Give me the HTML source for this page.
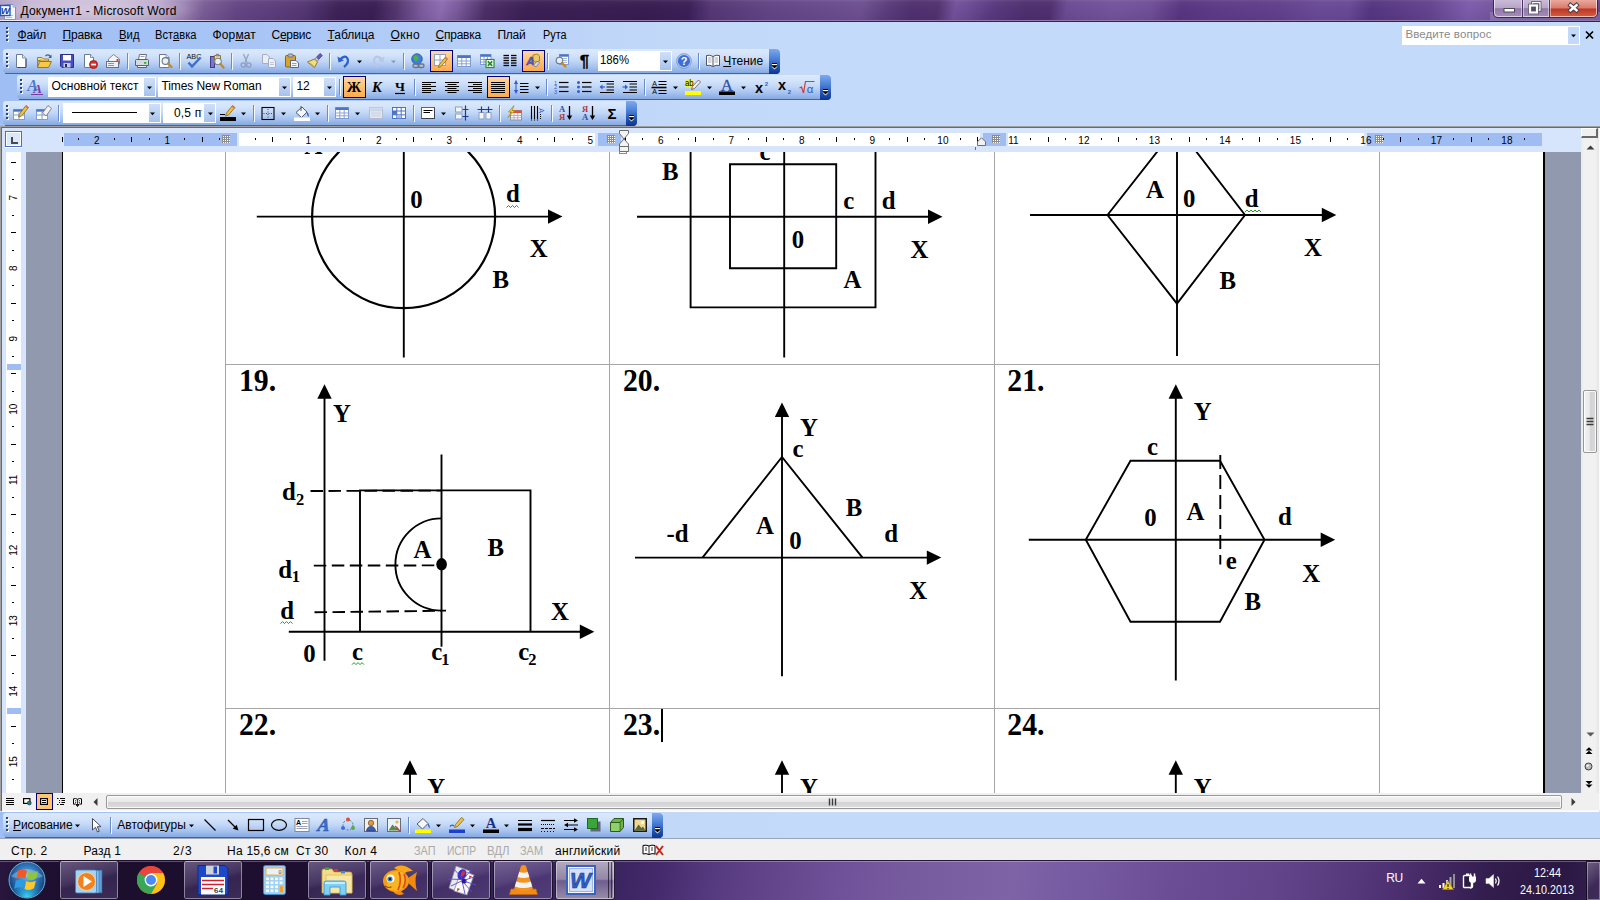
<!DOCTYPE html>
<html lang="ru"><head><meta charset="utf-8"><title>Документ1 - Microsoft Word</title>
<style>
html,body{margin:0;padding:0}
body{width:1600px;height:900px;position:relative;overflow:hidden;background:#c3d9f9;font-family:"Liberation Sans",sans-serif;font-size:12px;color:#000}
.t{position:absolute;white-space:pre;line-height:normal}
.ff-s{font-family:"Liberation Sans",sans-serif}
.ff-r{font-family:"Liberation Serif",serif}
div{box-sizing:border-box}
svg{position:absolute;overflow:visible}
u{text-decoration:underline;text-underline-offset:1px}

#titlebar{position:absolute;left:0;top:0;width:1600px;height:22px;overflow:hidden;
 background:linear-gradient(100deg,#b09bc4 0px,#c0aed0 30px,#c6b5d4 110px,#b9a5ca 158px,#9d85b5 182px,#7a5d95 202px,#644685 235px,#553774 300px,#3d2258 335px,#391f54 370px,#54366f 392px,#7c5c9e 418px,#8d6bb0 436px,#7a5a9c 452px,#4c2e66 480px,#3b2055 520px,#371d51 640px,#3b2058 680px,#553775 702px,#634586 760px,#6e5091 850px,#5b3c7c 875px,#50306f 900px,#52326f 925px,#73529a 942px,#6a4a92 957px,#5a3a80 978px,#4e2f6f 1012px,#50306f 1036px,#6b4b93 1052px,#74549c 1100px,#6f4f97 1135px,#5a3580 1165px,#5e3b87 1200px,#62408c 1260px,#6a4a96 1300px,#694995 1330px,#553580 1352px,#5c3c86 1380px,#64448e 1410px,#7d5cac 1448px,#76569f 1470px,#6a4a94 1500px,#64438e 1600px)}
#titlebar .hl{position:absolute;left:0;top:0;width:1600px;height:22px;background:linear-gradient(180deg,rgba(255,255,255,.10) 0,rgba(255,255,255,.03) 2px,rgba(255,255,255,0) 9px,rgba(20,0,40,.06) 19px)}
#titlebar .l1{position:absolute;left:0;top:20px;width:1600px;height:1px;background:linear-gradient(90deg,#efe8f4 0,#e2d8ea 180px,#a994be 260px,#9079a8 420px,#8f78a8 1600px)}
#titlebar .l2{position:absolute;left:0;top:21px;width:1600px;height:1px;background:#33224a}
#menubar{position:absolute;left:0;top:22px;width:1600px;height:106px;background:linear-gradient(90deg,#9fbef4 0,#a8c5f6 250px,#b9d1f8 500px,#c2d8f9 660px,#c4dafa 800px,#c4dafa 1600px)}
.tb{position:absolute;height:25px;border-radius:3px 0 0 4px}
.tb .bg{position:absolute;left:0;top:0;right:0;height:24px;border-radius:3px 2px 2px 4px;background:linear-gradient(180deg,#dce9fc 0,#d3e3fa 25%,#c1d7f7 50%,#a5c2ef 75%,#86a9e2 100%)}
.tb .sh{position:absolute;left:2px;right:2px;top:24px;height:1px;background:#4163a8}
.tb .cap{position:absolute;right:0;top:0;width:11px;height:25px;border-radius:0 4px 4px 0;background:linear-gradient(180deg,#7da9ee 0,#4b7fd6 40%,#1f4fae 75%,#0a3596 100%)}
.grip{position:absolute;width:3px;height:15px}
.grip i{position:absolute;left:0;width:2px;height:2px;background:#2a457e;box-shadow:1px 1px 0 #fff}
.sep{position:absolute;width:1px;height:16px;background:#6a8ccb;box-shadow:1px 1px 0 #f4f9ff}
.sel{position:absolute;border:1px solid #000080;background:linear-gradient(180deg,#ffd9a2 0,#ffc071 50%,#ffaa4e 100%)}
.cb{position:absolute;background:#fff;height:20px}
.cb .dd{position:absolute;right:1px;top:1px;bottom:1px;width:11px;background:linear-gradient(180deg,#cfdff7 0,#bcd2f3 50%,#a6c1ec 100%)}
.arr{position:absolute;width:0;height:0;border-left:3px solid transparent;border-right:3px solid transparent;border-top:3px solid #000}

#work{position:absolute;left:0;top:126px;width:1600px;height:686px;background:#d6e5fb}
#ws{position:absolute;left:26px;top:26px;width:1555px;height:641px;background:#9099ae;overflow:hidden}
#page{position:absolute;left:36px;top:0;width:1483px;height:641px;background:#fff;border-left:1px solid #000;border-right:2px solid #000}
.rn{position:absolute;font-size:10px;line-height:10px;width:20px;text-align:center;color:#000}

#vsb{position:absolute;left:1581px;top:2px;width:18px;height:665px;background:linear-gradient(90deg,#e9e9e9 0,#f1f1f1 3px,#f1f1f1 14px,#e6e6e6 18px)}
.thumb{position:absolute;border:1px solid #979797;border-radius:2px;box-shadow:inset 0 0 0 1px rgba(255,255,255,.8)}
#hrow{position:absolute;left:2px;top:667px;width:1597px;height:19px;background:#f0f0f0;border-bottom:1px solid #fff;box-shadow:inset 0 -1px 0 #f7f7f7}
#draw{position:absolute;left:0;top:812px;width:1600px;height:27px;background:linear-gradient(90deg,#9fbef4 0,#a8c5f6 250px,#b9d1f8 500px,#c2d8f9 660px,#c4dafa 800px)}
#status{position:absolute;left:0;top:839px;width:1600px;height:21px;background:#f0f0f0}
#taskbar{position:absolute;left:0;top:860px;width:1600px;height:40px;overflow:hidden;
 background:linear-gradient(100deg,#2a1740 0,#1f1031 40px,#1c0e2d 120px,#1e0f30 300px,#2c1a48 420px,#382458 520px,#3a2560 610px,#44296b 650px,#563a80 705px,#64468c 770px,#6f5199 830px,#775b9f 900px,#7e63a7 1000px,#7458a0 1080px,#6b4d95 1160px,#62448b 1260px,#55387b 1340px,#472b69 1400px,#331d4e 1470px,#2a1742 1540px,#3a2457 1600px)}
#taskbar .top{position:absolute;left:0;top:0;width:1600px;height:2px;background:linear-gradient(180deg,rgba(30,15,50,.9) 0,rgba(30,15,50,.9) 1px,rgba(255,255,255,.28) 1px,rgba(255,255,255,.28) 2px)}
.tbtn{position:absolute;top:0px;width:60px;height:40px;border-radius:3px;border:1px solid rgba(20,10,30,.85);box-shadow:inset 0 0 0 1px rgba(255,255,255,.42);background:linear-gradient(165deg,rgba(215,200,245,.40) 0,rgba(175,155,225,.27) 45%,rgba(150,128,212,.20) 55%,rgba(160,140,220,.24) 100%)}
.tbtn.act{background:linear-gradient(180deg,rgba(255,255,255,.62) 0,rgba(255,255,255,.45) 48%,rgba(235,225,255,.30) 52%,rgba(255,255,255,.48) 100%)}
</style></head>
<body>
<div id="titlebar"><div class="hl"></div><div class="l1"></div><div class="l2"></div><div style="position:absolute;left:-20px;top:-6px;width:230px;height:32px;background:radial-gradient(ellipse 50% 50% at 45% 50%,rgba(255,255,255,.26) 0,rgba(255,255,255,.18) 50%,rgba(255,255,255,0) 100%)"></div><svg style="left:0;top:3px" width="17" height="17" viewBox="0 0 17 17">
<path d="M4.5 1.5H13L15.5 4V16.5H4.5Z" fill="#f4f7fd" stroke="#7f95bd"/>
<path d="M6 12.5H13M6 14.5H12" stroke="#a9bfe6" stroke-width="1"/>
<path d="M13 1.5V4H15.5" fill="#dbe5f6" stroke="#7f95bd" stroke-width=".8"/>
<rect x="0.5" y="2.5" width="9.5" height="10" fill="#fff" stroke="#2a56b8" stroke-width="1.4"/>
<text x="5.2" y="11" font-family="Liberation Sans, sans-serif" font-size="9.5" font-weight="bold" font-style="italic" text-anchor="middle" fill="#1a3f9c">W</text>
</svg><span id="title" class="t ff-s" style="left:20.50px;top:3.84px;font-size:12px;letter-spacing:0.191px;">Документ1 - Microsoft Word</span><svg style="left:1492px;top:0" width="108" height="20" viewBox="0 0 108 20">
<defs>
<linearGradient id="wbg" x1="0" y1="0" x2="0" y2="1"><stop offset="0" stop-color="#cdbeda"/><stop offset=".48" stop-color="#b7a5c8"/><stop offset=".52" stop-color="#917aa8"/><stop offset="1" stop-color="#a78fbd"/></linearGradient>
<linearGradient id="wbr" x1="0" y1="0" x2="0" y2="1"><stop offset="0" stop-color="#eaa89c"/><stop offset=".48" stop-color="#d87a6c"/><stop offset=".52" stop-color="#bf3426"/><stop offset="1" stop-color="#d2603f"/></linearGradient>
</defs>
<path d="M-2 12H108V20H-2Z" fill="rgba(255,255,255,.16)"/>
<path d="M1.500 -1V13Q1.500 17.500 6 17.500H100Q105.500 17.500 105.500 13V-1Z" fill="url(#wbg)" stroke="#3a2850" stroke-width="1"/>
<path d="M57.500 0V17H100Q105 17 105 13V0Z" fill="url(#wbr)"/>
<path d="M2.500 0V13Q2.500 16.500 6 16.500H100Q104.500 16.500 104.500 13V0" fill="none" stroke="rgba(255,255,255,.6)" stroke-width="1"/>
<path d="M30.500 0V17M57.500 0V17" stroke="#4a3562" stroke-width="1"/>
<path d="M29.500 0V16M31.500 0V16M56.500 0V16M58.500 0V16" stroke="rgba(255,255,255,.45)" stroke-width="1"/>
<rect x="12" y="8.500" width="10.500" height="3.500" fill="#fff" stroke="#4b4b5a" stroke-width="1"/>
<rect x="40.500" y="2.700" width="7.500" height="7.500" fill="none" stroke="#4b4b5a" stroke-width="2.800"/><rect x="40.500" y="2.700" width="7.500" height="7.500" fill="none" stroke="#fff" stroke-width="1.300"/>
<rect x="38" y="5.500" width="7" height="7" fill="#5a4a6a" stroke="#4b4b5a" stroke-width="3.600"/><rect x="38" y="5.500" width="7" height="7" fill="#5a4a6a" stroke="#fff" stroke-width="2.200"/>
<path d="M78.500 5.200L84.500 10.300M84.500 5.200L78.500 10.300" stroke="#4b3b45" stroke-width="4.400" stroke-linecap="square"/>
<path d="M78.500 5.200L84.500 10.300M84.500 5.200L78.500 10.300" stroke="#fff" stroke-width="2.500" stroke-linecap="square"/>
</svg></div>
<div id="menubar"><div class="grip" style="left:6px;top:5px"><i style="top:0px"></i><i style="top:4px"></i><i style="top:8px"></i><i style="top:12px"></i></div><span id="m0" class="t ff-s" style="left:17.50px;top:5.84px;font-size:12px;letter-spacing:-0.254px;"><u>Ф</u>айл</span><span id="m1" class="t ff-s" style="left:62.50px;top:5.84px;font-size:12px;letter-spacing:-0.174px;"><u>П</u>равка</span><span id="m2" class="t ff-s" style="left:118.50px;top:5.84px;font-size:12px;transform:scaleX(0.9432);transform-origin:0 0;"><u>В</u>ид</span><span id="m3" class="t ff-s" style="left:154.50px;top:5.84px;font-size:12px;transform:scaleX(0.9300);transform-origin:0 0;">Вст<u>а</u>вка</span><span id="m4" class="t ff-s" style="left:212.50px;top:5.84px;font-size:12px;letter-spacing:0.143px;">Фор<u>м</u>ат</span><span id="m5" class="t ff-s" style="left:271.50px;top:5.84px;font-size:12px;letter-spacing:-0.271px;">С<u>е</u>рвис</span><span id="m6" class="t ff-s" style="left:327.50px;top:5.84px;font-size:12px;letter-spacing:-0.009px;"><u>Т</u>аблица</span><span id="m7" class="t ff-s" style="left:390.50px;top:5.84px;font-size:12px;letter-spacing:0.398px;"><u>О</u>кно</span><span id="m8" class="t ff-s" style="left:435.50px;top:5.84px;font-size:12px;letter-spacing:-0.228px;"><u>С</u>правка</span><span id="m9" class="t ff-s" style="left:497.50px;top:5.84px;font-size:12px;letter-spacing:-0.254px;">Плай</span><span id="m10" class="t ff-s" style="left:542.50px;top:5.84px;font-size:12px;transform:scaleX(0.9022);transform-origin:0 0;">Рута</span><div style="position:absolute;left:1402px;top:3.5px;width:178px;height:19.5px;background:#fff"><div style="position:absolute;left:166px;top:1px;width:11px;height:17.5px;background:#c3d9f9"></div><svg style="left:168px;top:8.5px" width="7" height="4" viewBox="0 0 7 4"><path d="M1 0.5H6L3.5 3.2Z" fill="#000"/></svg></div><span id="ask" class="t ff-s" style="left:1405.50px;top:5.59px;font-size:11.5px;color:#8a8a8a;letter-spacing:0.085px;">Введите вопрос</span><svg style="left:1585px;top:9px" width="9" height="8" viewBox="0 0 9 8"><path d="M1 0.500L8 7.500M8 0.500L1 7.500" stroke="#000" stroke-width="1.700"/></svg><div class="tb" style="left:3px;top:27px;width:776.5px"><div class="bg"></div><div class="sh"></div><div class="cap"></div><div class="grip" style="left:3px;top:3.5px"><i style="top:0px"></i><i style="top:4px"></i><i style="top:8px"></i><i style="top:12px"></i></div><svg style="left:10px;top:4px" width="16" height="16" viewBox="0 0 16 16"><path d="M3.500 1.500H9.500L13 5V14.500H3.500Z" fill="#fff" stroke="#6b7a99"/><path d="M9.500 1.500V5H13" fill="#dfe7f5" stroke="#6b7a99" stroke-width=".8"/><path d="M4.500 14.500H13M13 6V14" stroke="#3f4d6b" stroke-width="1"/></svg><svg style="left:33px;top:4px" width="16" height="16" viewBox="0 0 16 16"><path d="M1.500 4.500H6L7.500 6H12.500V8H1.500Z" fill="#f6dc84" stroke="#a4801f"/><path d="M1.500 14.500V7.500H4L5 6.500" fill="none" stroke="#a4801f"/><path d="M3.500 8.500H15.500L12.500 14.500H1.500Z" fill="#f9c846" stroke="#9b771a"/><path d="M9.500 3Q12 0.500 14.500 3.500" fill="none" stroke="#3d5f9f" stroke-width="1.200"/><path d="M15.500 1.500V5H12.300Z" fill="#3d5f9f"/></svg><svg style="left:56px;top:4px" width="16" height="16" viewBox="0 0 16 16"><path d="M1.500 1.500H14.500V14.500H3L1.500 13Z" fill="#4a4fc4" stroke="#2b2f86"/><rect x="4" y="2" width="8" height="5.500" fill="#fff"/><rect x="4.500" y="10" width="7" height="4.500" fill="#c8cbe6"/><rect x="6" y="11" width="2" height="3" fill="#23265f"/></svg><svg style="left:79px;top:4px" width="16" height="16" viewBox="0 0 16 16"><path d="M2.500 1.500H8.500L11.500 4.500V14.500H2.500Z" fill="#fff" stroke="#6b7a99"/><path d="M8.500 1.500V4.500H11.500" fill="#dfe7f5" stroke="#6b7a99" stroke-width=".8"/><circle cx="11.500" cy="11.500" r="4" fill="#d9301f" stroke="#8f1a10" stroke-width=".8"/><rect x="9" y="10.700" width="5" height="1.700" fill="#fff"/></svg><svg style="left:102px;top:4px" width="16" height="16" viewBox="0 0 16 16"><path d="M3.500 6L8.500 1.500L14.500 6V11H3.500Z" fill="#f5f6fa" stroke="#7c8699"/><rect x="1.500" y="8.500" width="12" height="6" fill="#eef0f6" stroke="#697388"/><path d="M3 10.500H9M3 12.500H9" stroke="#8a93a8"/><rect x="11.500" y="6" width="2" height="2" fill="#d4402a"/></svg><div class="sep" style="left:124px;top:4px"></div><svg style="left:131px;top:4px" width="16" height="16" viewBox="0 0 16 16"><path d="M4.500 6.500L5.500 1.500H12.500L11.500 6.500" fill="#fff" stroke="#6a6f7c"/><path d="M1.500 7.500Q1.500 6.500 2.500 6.500H13.500Q14.500 6.500 14.500 7.500V12.500H1.500Z" fill="#d5d9e2" stroke="#5b606d"/><path d="M3.500 12.500H12.500V14.500H3.500Z" fill="#f3f4f7" stroke="#5b606d"/><rect x="10" y="9" width="2.400" height="1.800" fill="#2fb52a"/><path d="M6.500 3.500H10.500" stroke="#9aa0ad"/></svg><svg style="left:154px;top:4px" width="16" height="16" viewBox="0 0 16 16"><path d="M2.500 1.500H9L12 4.500V14.500H2.500Z" fill="#fff" stroke="#6b7a99"/><path d="M9 1.500V4.500H12" fill="#dfe7f5" stroke="#6b7a99" stroke-width=".8"/><circle cx="8.500" cy="8" r="3.400" fill="#e8f2fb" stroke="#6d7888" stroke-width="1.100"/><path d="M11 10.500L14.500 14" stroke="#c78a22" stroke-width="2.400" stroke-linecap="round"/></svg><div class="sep" style="left:176px;top:4px"></div><svg style="left:183px;top:4px" width="16" height="16" viewBox="0 0 16 16"><text x="8" y="6" font-family="Liberation Sans, sans-serif" font-size="7.300" text-anchor="middle" fill="#111" textLength="15" lengthAdjust="spacingAndGlyphs">ABC</text><path d="M2.500 9.500L6 13.500L14.500 4.500" fill="none" stroke="#3a6fd0" stroke-width="2.400"/></svg><svg style="left:206px;top:4px" width="16" height="16" viewBox="0 0 16 16"><rect x="1.500" y="3.500" width="4" height="11" fill="#7c74c6" stroke="#443c8c"/><path d="M5.500 2.500H11.500V9H5.500Z" fill="#f0d890" stroke="#8c7530"/><rect x="7" y="0.800" width="3" height="2.500" fill="#8a8a8a"/><circle cx="9" cy="8.500" r="3.300" fill="#eaf3fb" stroke="#78808e" stroke-width="1.100"/><path d="M11.500 11L14.500 14.500" stroke="#c78a22" stroke-width="2.400" stroke-linecap="round"/></svg><div class="sep" style="left:228px;top:4px"></div><svg style="left:235px;top:4px" width="16" height="16" viewBox="0 0 16 16"><path d="M5.500 1L9 9.500M10.500 1L7 9.500" stroke="#97a3b8" stroke-width="1.300" fill="none"/><circle cx="5.300" cy="12" r="2.200" fill="none" stroke="#8f9dc0" stroke-width="1.300"/><circle cx="10.700" cy="12" r="2.200" fill="none" stroke="#8f9dc0" stroke-width="1.300"/></svg><svg style="left:258px;top:4px" width="16" height="16" viewBox="0 0 16 16"><path d="M1.500 1.500H6L8.500 4V10.500H1.500Z" fill="#e9edf5" stroke="#a3aec2"/><path d="M7.500 5.500H12L14.500 8V14.500H7.500Z" fill="#eef1f7" stroke="#a3aec2"/><path d="M9 9.500H13M9 11.500H13" stroke="#b7c0d0" stroke-width=".9"/></svg><svg style="left:281px;top:4px" width="16" height="16" viewBox="0 0 16 16"><rect x="1.500" y="2.500" width="10" height="11.500" rx="1" fill="#d9a426" stroke="#8a6510"/><rect x="4" y="1" width="5" height="3" rx="1" fill="#b9bcc6" stroke="#5f6370" stroke-width=".8"/><path d="M6.500 7.500H12L14.500 10V14.500H6.500Z" fill="#f4f6fb" stroke="#5d6880"/><path d="M8 10.500H12.500M8 12.500H12.500" stroke="#8b95ac" stroke-width=".9"/></svg><svg style="left:304px;top:4px" width="16" height="16" viewBox="0 0 16 16"><path d="M13 0.500L15.300 2.500L11.500 6.500L9.300 4.500Z" fill="#6a5cc0" stroke="#3d3384" stroke-width=".8"/><path d="M9.300 4.300L11.700 6.700L10 8.500L7.500 6.300Z" fill="#c9ccd6" stroke="#70737f" stroke-width=".7"/><path d="M7.500 6L10.500 9L7.500 14.500L0.500 9Z" fill="#f3dc86" stroke="#8a6f1c" stroke-width=".9"/><path d="M3 10L6.500 12.500" stroke="#c9a83c" stroke-width=".8"/></svg><div class="sep" style="left:326px;top:4px"></div><svg style="left:333px;top:4px" width="16" height="16" viewBox="0 0 16 16"><path d="M4 6.500Q9 1.500 11.500 5.500Q13.500 9.500 8 14" fill="none" stroke="#2f5fd0" stroke-width="2.300"/><path d="M1.500 3.500L2.500 9.500L8 7.500Z" fill="#2f5fd0"/></svg><svg style="left:353.3px;top:10.5px" width="7" height="4" viewBox="0 0 7 4"><path d="M1 0.5H6L3.5 3.2Z" fill="#000"/></svg><svg style="left:367px;top:4px" width="16" height="16" viewBox="0 0 16 16"><path d="M12 6.500Q7 1.500 4.500 5.500Q2.500 9.500 8 14" fill="none" stroke="#b9c7e4" stroke-width="2.300"/><path d="M14.500 3.500L13.500 9.500L8 7.500Z" fill="#b9c7e4"/></svg><svg style="left:387.3px;top:10.5px" width="7" height="4" viewBox="0 0 7 4"><path d="M1 0.5H6L3.5 3.2Z" fill="#8a9bb8"/></svg><div class="sep" style="left:400px;top:4px"></div><svg style="left:407px;top:4px" width="16" height="16" viewBox="0 0 16 16"><circle cx="7" cy="6" r="5.300" fill="#3f7fd8" stroke="#2a56a0" stroke-width=".8"/><path d="M4 3Q7 1 8 4Q9.500 6 7 7.500Q5 9 4.500 6.500Q2.500 5 4 3Z" fill="#4fb04a"/><rect x="3" y="11" width="6" height="3.500" rx="1.700" fill="none" stroke="#6e7480" stroke-width="1.400"/><rect x="8" y="11" width="6" height="3.500" rx="1.700" fill="none" stroke="#6e7480" stroke-width="1.400"/></svg><div class="sel" style="left:426.5px;top:1px;width:23px;height:22px"></div><svg style="left:430px;top:4px" width="16" height="16" viewBox="0 0 16 16"><rect x="1.500" y="1.500" width="11" height="11" fill="#fff" stroke="#8ea3c8"/><path d="M1.500 7H12.500M7 1.500V12.500" stroke="#8ea3c8" stroke-width="1"/><path d="M12.500 4L14.500 6L8 13.500L5.500 14.500L6 12Z" fill="#f0c24a" stroke="#8a6414" stroke-width=".8"/><path d="M12.500 4L14.500 6L13.500 7L11.500 5Z" fill="#e0705a"/></svg><svg style="left:453px;top:4px" width="16" height="16" viewBox="0 0 16 16"><rect x="1.500" y="2.500" width="13" height="11" fill="#fff" stroke="#7f9bd0"/><rect x="1.500" y="2.500" width="13" height="2.500" fill="#4a74c8"/><path d="M1.500 8H14.500M1.500 10.800H14.500M5.800 5V13.500M10.200 5V13.500" stroke="#7f9bd0" stroke-width=".9"/></svg><svg style="left:476px;top:4px" width="16" height="16" viewBox="0 0 16 16"><rect x="1.500" y="1.500" width="10.500" height="10" fill="#fff" stroke="#7f9bd0"/><rect x="1.500" y="1.500" width="10.500" height="2.300" fill="#4a74c8"/><path d="M1.500 6.500H12M1.500 9H12M5 3.800V11.500M8.500 3.800V11.500" stroke="#7f9bd0" stroke-width=".9"/><rect x="7" y="6.500" width="8" height="8" fill="#fff" stroke="#2a8a2f" stroke-width="1.200"/><path d="M8.800 8.300L13.200 12.800M13.200 8.300L8.800 12.800" stroke="#2a8a2f" stroke-width="1.800"/></svg><svg style="left:499px;top:4px" width="16" height="16" viewBox="0 0 16 16"><path d="M1.5 2.5H7" stroke="#000" stroke-width="1.3"/><path d="M1.5 5H7" stroke="#000" stroke-width="1.3"/><path d="M1.5 7.5H7" stroke="#000" stroke-width="1.3"/><path d="M1.5 10H7" stroke="#000" stroke-width="1.3"/><path d="M1.5 12.5H7" stroke="#000" stroke-width="1.3"/><path d="M9 2.5H14.5" stroke="#000" stroke-width="1.3"/><path d="M9 5H14.5" stroke="#000" stroke-width="1.3"/><path d="M9 7.5H14.5" stroke="#000" stroke-width="1.3"/><path d="M9 10H14.5" stroke="#000" stroke-width="1.3"/><path d="M9 12.5H14.5" stroke="#000" stroke-width="1.3"/></svg><div class="sel" style="left:518.5px;top:1px;width:23px;height:22px"></div><svg style="left:522px;top:4px" width="16" height="16" viewBox="0 0 16 16"><path d="M8 2L12.500 1L14.500 3V8L10 9L8 7Z" fill="#e8cc6a" stroke="#8e7320" stroke-width=".8"/><text x="5.500" y="12" font-family="Liberation Sans, sans-serif" font-size="11.500" font-weight="bold" font-style="italic" text-anchor="middle" fill="#5a5cc8" stroke="#34368a" stroke-width=".4">A</text><path d="M8.500 12L12 8.500Q14 8 14.500 10L11.500 13.500Q9.500 14.500 8.500 12Z" fill="#d5d8e0" stroke="#6d717d" stroke-width=".8"/></svg><div class="sep" style="left:544px;top:4px"></div><svg style="left:551px;top:4px" width="16" height="16" viewBox="0 0 16 16"><rect x="5.500" y="1.500" width="9" height="10" fill="#fff" stroke="#7f9bd0"/><rect x="5.500" y="1.500" width="9" height="2.200" fill="#4a74c8"/><path d="M9 5.500H13M9 7.500H13M9 9.500H13" stroke="#9fb3da" stroke-width=".9"/><circle cx="5.500" cy="7.500" r="3.300" fill="#dff0fb" stroke="#6d7888" stroke-width="1.100"/><path d="M8 10L11.500 13.500" stroke="#c78a22" stroke-width="2.400" stroke-linecap="round"/></svg><svg style="left:574px;top:4px" width="16" height="16" viewBox="0 0 16 16"><text x="7.500" y="13.500" font-family="Liberation Sans, sans-serif" font-size="17" font-weight="bold" text-anchor="middle" fill="#000" stroke="#000" stroke-width=".3">¶</text></svg><div class="cb" style="left:594.5px;top:2px;width:74px"><div class="dd"></div><svg style="left:64.5px;top:9px" width="7" height="4" viewBox="0 0 7 4"><path d="M1 0.5H6L3.5 3.2Z" fill="#000"/></svg></div><span id="zoom" class="t ff-s" style="left:597.10px;top:4.44px;font-size:12px;transform:scaleX(0.9445);transform-origin:0 0;">186%</span><svg style="left:673px;top:4px" width="16" height="16" viewBox="0 0 16 16"><circle cx="8" cy="8" r="6.700" fill="#3b6fd6" stroke="#b8cdf0" stroke-width="1.200"/><circle cx="8" cy="8" r="7.400" fill="none" stroke="#5c7dbb" stroke-width=".6"/><text x="8" y="12" font-family="Liberation Sans, sans-serif" font-size="11" font-weight="bold" text-anchor="middle" fill="#fff">?</text></svg><div class="sep" style="left:695px;top:4px"></div><svg style="left:702px;top:4px" width="16" height="16" viewBox="0 0 16 16"><path d="M8 3.500Q5 1.500 1.500 2.500V12.500Q5 11.500 8 13.500Q11 11.500 14.500 12.500V2.500Q11 1.500 8 3.500Z" fill="#fff" stroke="#4d5566" stroke-width="1"/><path d="M8 3.500V13.500" stroke="#4d5566"/><path d="M3 5H6.500M3 7H6.500M3 9H6.500M9.500 5H13M9.500 7H13M9.500 9H13" stroke="#8f97a8" stroke-width=".8"/></svg><span id="reading" class="t ff-s" style="left:720.20px;top:4.84px;font-size:12px;letter-spacing:-0.008px;"><u>Ч</u>тение</span><svg style="left:767.5px;top:14px" width="7" height="7" viewBox="0 0 7 7"><path d="M1 1.500H6" stroke="#fff" stroke-width="1"/><path d="M0.500 3.500H6.500L3.500 6.500Z" fill="#fff"/><path d="M1 .5H6" stroke="#000" stroke-width="1"/><path d="M0.5 2.5H6.5L3.5 5.5Z" fill="#000"/></svg></div><div class="tb" style="left:17px;top:53px;width:813.8px"><div class="bg"></div><div class="sh"></div><div class="cap"></div><div class="grip" style="left:3px;top:3.5px"><i style="top:0px"></i><i style="top:4px"></i><i style="top:8px"></i><i style="top:12px"></i></div><svg style="left:10px;top:4px" width="16" height="16" viewBox="0 0 16 16"><text x="5.500" y="11.500" font-family="Liberation Serif, serif" font-size="16" font-style="italic" font-weight="bold" text-anchor="middle" fill="#4b7bd4">A</text><text x="10.500" y="14.300" font-family="Liberation Serif, serif" font-size="13" font-style="italic" font-weight="bold" text-anchor="middle" fill="#7a3aa8">A</text><path d="M4 15.500H16" stroke="#7a3aa8" stroke-width="1"/></svg><div class="cb" style="left:30.5px;top:2px;width:108px"><div class="dd"></div><svg style="left:98.5px;top:9px" width="7" height="4" viewBox="0 0 7 4"><path d="M1 0.5H6L3.5 3.2Z" fill="#000"/></svg></div><span id="style" class="t ff-s" style="left:34.50px;top:4.44px;font-size:12px;letter-spacing:-0.019px;">Основной текст</span><div class="cb" style="left:140.5px;top:2px;width:133px"><div class="dd"></div><svg style="left:123.5px;top:9px" width="7" height="4" viewBox="0 0 7 4"><path d="M1 0.5H6L3.5 3.2Z" fill="#000"/></svg></div><span id="fontn" class="t ff-s" style="left:144.50px;top:4.44px;font-size:12px;letter-spacing:-0.105px;">Times New Roman</span><div class="cb" style="left:275.5px;top:2px;width:43px"><div class="dd"></div><svg style="left:33.5px;top:9px" width="7" height="4" viewBox="0 0 7 4"><path d="M1 0.5H6L3.5 3.2Z" fill="#000"/></svg></div><span id="fsize" class="t ff-s" style="left:279.50px;top:4.44px;font-size:12px;letter-spacing:-0.180px;">12</span><div class="sep" style="left:322.3px;top:4px"></div><div class="sel" style="left:325.8px;top:1px;width:23px;height:22px"></div><svg style="left:329.3px;top:4px" width="16" height="16" viewBox="0 0 16 16"><text x="8" y="13" font-family="Liberation Serif, serif" font-size="14.500" font-weight="bold" text-anchor="middle" fill="#000">Ж</text></svg><svg style="left:352.3px;top:4px" width="16" height="16" viewBox="0 0 16 16"><text x="8" y="13" font-family="Liberation Serif, serif" font-size="14.500" font-weight="bold" font-style="italic" text-anchor="middle" fill="#000">К</text></svg><svg style="left:375.3px;top:4px" width="16" height="16" viewBox="0 0 16 16"><text x="8" y="12" font-family="Liberation Serif, serif" font-size="13.500" font-weight="bold" text-anchor="middle" fill="#000">Ч</text><path d="M3 14.500H13" stroke="#000" stroke-width="1.200"/></svg><div class="sep" style="left:397.3px;top:4px"></div><svg style="left:404.3px;top:4px" width="16" height="16" viewBox="0 0 16 16"><path d="M1 3.5H15" stroke="#000" stroke-width="1"/><path d="M1 7.5H15" stroke="#000" stroke-width="1"/><path d="M1 11.5H15" stroke="#000" stroke-width="1"/><path d="M1 5.5H10" stroke="#000" stroke-width="1"/><path d="M1 9.5H10" stroke="#000" stroke-width="1"/><path d="M1 13.5H10" stroke="#000" stroke-width="1"/></svg><svg style="left:427.3px;top:4px" width="16" height="16" viewBox="0 0 16 16"><path d="M1 3.5H15" stroke="#000" stroke-width="1"/><path d="M1 7.5H15" stroke="#000" stroke-width="1"/><path d="M1 11.5H15" stroke="#000" stroke-width="1"/><path d="M3.5 5.5H12.5" stroke="#000" stroke-width="1"/><path d="M3.5 9.5H12.5" stroke="#000" stroke-width="1"/><path d="M3.5 13.5H12.5" stroke="#000" stroke-width="1"/></svg><svg style="left:450.3px;top:4px" width="16" height="16" viewBox="0 0 16 16"><path d="M1 3.5H15" stroke="#000" stroke-width="1"/><path d="M1 7.5H15" stroke="#000" stroke-width="1"/><path d="M1 11.5H15" stroke="#000" stroke-width="1"/><path d="M6 5.5H15" stroke="#000" stroke-width="1"/><path d="M6 9.5H15" stroke="#000" stroke-width="1"/><path d="M6 13.5H15" stroke="#000" stroke-width="1"/></svg><div class="sel" style="left:469.8px;top:1px;width:23px;height:22px"></div><svg style="left:473.3px;top:4px" width="16" height="16" viewBox="0 0 16 16"><path d="M1 3.5H15" stroke="#000" stroke-width="1"/><path d="M1 5.5H15" stroke="#000" stroke-width="1"/><path d="M1 7.5H15" stroke="#000" stroke-width="1"/><path d="M1 9.5H15" stroke="#000" stroke-width="1"/><path d="M1 11.5H15" stroke="#000" stroke-width="1"/><path d="M1 13.5H15" stroke="#000" stroke-width="1"/></svg><svg style="left:496.3px;top:4px" width="16" height="16" viewBox="0 0 16 16"><path d="M7 4.5H15.5" stroke="#000" stroke-width="1"/><path d="M7 7.5H15.5" stroke="#000" stroke-width="1"/><path d="M7 10.5H15.5" stroke="#000" stroke-width="1"/><path d="M7 13.5H15.5" stroke="#000" stroke-width="1"/><path d="M3 1.500V14.500" stroke="#2f5fd0" stroke-width="1.100"/><path d="M0.800 5L3 1.500L5.200 5ZM0.800 11L3 14.500L5.200 11Z" fill="#2f5fd0"/></svg><svg style="left:516.6px;top:10.5px" width="7" height="4" viewBox="0 0 7 4"><path d="M1 0.5H6L3.5 3.2Z" fill="#000"/></svg><div class="sep" style="left:529.3px;top:4px"></div><svg style="left:536.3px;top:4px" width="16" height="16" viewBox="0 0 16 16"><path d="M6 3.5H15.5" stroke="#000" stroke-width="1.2"/><path d="M6 8H15.5" stroke="#000" stroke-width="1.2"/><path d="M6 12.5H15.5" stroke="#000" stroke-width="1.2"/><text x="2.500" y="5.500" font-family="Liberation Sans, sans-serif" font-size="5.500" text-anchor="middle" fill="#2f5fd0">1</text><text x="2.500" y="10" font-family="Liberation Sans, sans-serif" font-size="5.500" text-anchor="middle" fill="#2f5fd0">2</text><text x="2.500" y="14.500" font-family="Liberation Sans, sans-serif" font-size="5.500" text-anchor="middle" fill="#2f5fd0">3</text></svg><svg style="left:559.3px;top:4px" width="16" height="16" viewBox="0 0 16 16"><path d="M6 3.5H15.5" stroke="#000" stroke-width="1.2"/><path d="M6 8H15.5" stroke="#000" stroke-width="1.2"/><path d="M6 12.5H15.5" stroke="#000" stroke-width="1.2"/><circle cx="2.500" cy="3.500" r="1.500" fill="#2f5fd0"/><circle cx="2.500" cy="8" r="1.500" fill="#2f5fd0"/><circle cx="2.500" cy="12.500" r="1.500" fill="#2f5fd0"/></svg><svg style="left:582.3px;top:4px" width="16" height="16" viewBox="0 0 16 16"><path d="M1 2.5H15" stroke="#000" stroke-width="1"/><path d="M1 13.5H15" stroke="#000" stroke-width="1"/><path d="M7.5 5H15" stroke="#000" stroke-width="1"/><path d="M7.5 8H15" stroke="#000" stroke-width="1"/><path d="M7.5 11H15" stroke="#000" stroke-width="1"/><path d="M6 8H2" stroke="#2f5fd0" stroke-width="1.200"/><path d="M3.500 5.500L0.500 8L3.500 10.500Z" fill="#2f5fd0"/></svg><svg style="left:605.3px;top:4px" width="16" height="16" viewBox="0 0 16 16"><path d="M1 2.5H15" stroke="#000" stroke-width="1"/><path d="M1 13.5H15" stroke="#000" stroke-width="1"/><path d="M7.5 5H15" stroke="#000" stroke-width="1"/><path d="M7.5 8H15" stroke="#000" stroke-width="1"/><path d="M7.5 11H15" stroke="#000" stroke-width="1"/><path d="M0.500 8H4" stroke="#2f5fd0" stroke-width="1.200"/><path d="M3 5.500L6 8L3 10.500Z" fill="#2f5fd0"/></svg><div class="sep" style="left:627.3px;top:4px"></div><svg style="left:634.3px;top:4px" width="16" height="16" viewBox="0 0 16 16"><text x="3.500" y="6.500" font-family="Liberation Sans, sans-serif" font-size="7" text-anchor="middle" fill="#000">A</text><text x="3.500" y="15" font-family="Liberation Sans, sans-serif" font-size="7" text-anchor="middle" fill="#000">A</text><path d="M7.5 2.5H15.5" stroke="#000" stroke-width="1"/><path d="M7.5 5.5H15.5" stroke="#000" stroke-width="1"/><path d="M0.5 8.5H15.5" stroke="#000" stroke-width="1.6"/><path d="M7.5 11.5H15.5" stroke="#000" stroke-width="1"/><path d="M7.5 14.5H15.5" stroke="#000" stroke-width="1"/></svg><svg style="left:654.6px;top:10.5px" width="7" height="4" viewBox="0 0 7 4"><path d="M1 0.5H6L3.5 3.2Z" fill="#000"/></svg><svg style="left:668.3px;top:4px" width="16" height="16" viewBox="0 0 16 16"><rect x="0" y="0.500" width="8" height="8" fill="#f7f13a"/><text x="4.300" y="7" font-family="Liberation Sans, sans-serif" font-size="8.500" text-anchor="middle" fill="#000" textLength="8.500" lengthAdjust="spacingAndGlyphs">ab</text><path d="M13.500 1L15.500 3L9.500 9.500L6.500 10.500L7.500 7.500Z" fill="#f4f4f8" stroke="#555" stroke-width=".8"/><path d="M6.500 10.500L8 8.500L9 9.500Z" fill="#c89a3a"/><rect x="0" y="12" width="16" height="4" fill="#ffff00"/></svg><svg style="left:688.6px;top:10.5px" width="7" height="4" viewBox="0 0 7 4"><path d="M1 0.5H6L3.5 3.2Z" fill="#000"/></svg><svg style="left:702.3px;top:4px" width="16" height="16" viewBox="0 0 16 16"><text x="8" y="11.500" font-family="Liberation Serif, serif" font-size="17" text-anchor="middle" fill="#2f4ea6" stroke="#2f4ea6" stroke-width=".3">A</text><rect x="0" y="12.500" width="16" height="3.500" fill="#000"/></svg><svg style="left:722.6px;top:10.5px" width="7" height="4" viewBox="0 0 7 4"><path d="M1 0.5H6L3.5 3.2Z" fill="#000"/></svg><svg style="left:736.3px;top:4px" width="16" height="16" viewBox="0 0 16 16"><text x="6" y="14" font-family="Liberation Sans, sans-serif" font-size="14.500" font-weight="bold" text-anchor="middle" fill="#000">x</text><text x="13.500" y="6.500" font-family="Liberation Sans, sans-serif" font-size="6" font-weight="bold" text-anchor="middle" fill="#2f5fd0">2</text></svg><svg style="left:759.3px;top:4px" width="16" height="16" viewBox="0 0 16 16"><text x="6" y="11" font-family="Liberation Sans, sans-serif" font-size="14.500" font-weight="bold" text-anchor="middle" fill="#000">x</text><text x="13.500" y="14.500" font-family="Liberation Sans, sans-serif" font-size="6" font-weight="bold" text-anchor="middle" fill="#2f5fd0">2</text></svg><svg style="left:782.3px;top:4px" width="16" height="16" viewBox="0 0 16 16"><path d="M0.500 9L2.500 8L4.500 14L6.500 2.500H15.500" fill="none" stroke="#d03a3a" stroke-width="1.200"/><text x="11" y="13.500" font-family="Liberation Sans, sans-serif" font-size="11.500" text-anchor="middle" fill="#2f5fd0">α</text></svg><svg style="left:804.8px;top:14px" width="7" height="7" viewBox="0 0 7 7"><path d="M1 1.500H6" stroke="#fff" stroke-width="1"/><path d="M0.500 3.500H6.500L3.500 6.500Z" fill="#fff"/><path d="M1 .5H6" stroke="#000" stroke-width="1"/><path d="M0.5 2.5H6.5L3.5 5.5Z" fill="#000"/></svg></div><div class="tb" style="left:3px;top:79px;width:634px"><div class="bg"></div><div class="sh"></div><div class="cap"></div><div class="grip" style="left:3px;top:3.5px"><i style="top:0px"></i><i style="top:4px"></i><i style="top:8px"></i><i style="top:12px"></i></div><svg style="left:10px;top:4px" width="16" height="16" viewBox="0 0 16 16"><rect x="0.500" y="4.500" width="11" height="10" fill="#fff" stroke="#7f9bd0"/><rect x="0.500" y="4.500" width="11" height="2.200" fill="#4a74c8"/><path d="M0.500 10H11.500M6 6.700V14.500" stroke="#7f9bd0"/><path d="M13 0.500L15.500 2.500L8.500 11L5.500 12L6.500 9Z" fill="#f0c24a" stroke="#8a6414" stroke-width=".8"/><path d="M13 0.500L15.500 2.500L14.500 3.700L12 1.700Z" fill="#e0705a"/></svg><svg style="left:33px;top:4px" width="16" height="16" viewBox="0 0 16 16"><rect x="0.500" y="4.500" width="11" height="10" fill="#fff" stroke="#7f9bd0"/><rect x="0.500" y="4.500" width="11" height="2.200" fill="#4a74c8"/><path d="M0.500 10H11.500M6 6.700V14.500" stroke="#7f9bd0"/><path d="M12 0.500L15.500 3.500L10 11L6.500 8Z" fill="#f2f3f7" stroke="#767b88" stroke-width=".9"/></svg><div class="sep" style="left:55px;top:4px"></div><div class="cb" style="left:59.5px;top:2px;width:98px"><div class="dd"></div><svg style="left:86.5px;top:9px" width="7" height="4" viewBox="0 0 7 4"><path d="M1 0.5H6L3.5 3.2Z" fill="#000"/></svg><div style="position:absolute;left:9.500px;top:8.500px;width:65px;height:1px;background:#000"></div></div><div class="cb" style="left:160px;top:2px;width:53px"><div class="dd"></div><svg style="left:43.5px;top:9px" width="7" height="4" viewBox="0 0 7 4"><path d="M1 0.5H6L3.5 3.2Z" fill="#000"/></svg></div><div style="position:absolute;left:171px;top:2px;width:27.500px;height:20px;overflow:hidden"><span id="lw" class="t ff-s" style="left:0.00px;top:3.14px;font-size:12px;letter-spacing:0.164px;">0,5 пт</span></div><svg style="left:216.5px;top:4px" width="16" height="16" viewBox="0 0 16 16"><path d="M12.500 0.500L15 2.500L8.500 10L5.500 11L6.500 8Z" fill="#f0c24a" stroke="#8a6414" stroke-width=".8"/><path d="M12.500 0.500L15 2.500L14 3.700L11.500 1.700Z" fill="#e0705a"/><path d="M0 9.500H5" stroke="#000" stroke-width="1"/><rect x="0" y="12" width="16" height="4" fill="#000"/></svg><svg style="left:236.8px;top:10.5px" width="7" height="4" viewBox="0 0 7 4"><path d="M1 0.5H6L3.5 3.2Z" fill="#000"/></svg><div class="sep" style="left:249.5px;top:4px"></div><svg style="left:256.5px;top:4px" width="16" height="16" viewBox="0 0 16 16"><rect x="2" y="2.500" width="12" height="12" fill="none" stroke="#000" stroke-width="1.100"/><path d="M8 4V13.500M3.500 8.500H13" stroke="#444" stroke-width="1" stroke-dasharray="1 1.500"/></svg><svg style="left:276.8px;top:10.5px" width="7" height="4" viewBox="0 0 7 4"><path d="M1 0.5H6L3.5 3.2Z" fill="#000"/></svg><svg style="left:290.5px;top:4px" width="16" height="16" viewBox="0 0 16 16"><path d="M2 7.500L8 2L13 7L7.500 12.500Z" fill="#f5f7fb" stroke="#4f5a70" stroke-width="1"/><path d="M7 1V6" stroke="#4f5a70" stroke-width="1"/><path d="M13 7Q15.500 9 14.500 12Q13 10 12.500 7.500Z" fill="#2f5fd0"/><rect x="0" y="12.500" width="16" height="3.500" fill="#fff"/></svg><svg style="left:310.8px;top:10.5px" width="7" height="4" viewBox="0 0 7 4"><path d="M1 0.5H6L3.5 3.2Z" fill="#000"/></svg><div class="sep" style="left:323.5px;top:4px"></div><svg style="left:330.5px;top:4px" width="16" height="16" viewBox="0 0 16 16"><rect x="1.500" y="2.500" width="13" height="11" fill="#fff" stroke="#7f9bd0"/><rect x="1.500" y="2.500" width="13" height="2.500" fill="#4a74c8"/><path d="M1.500 8H14.500M1.500 10.800H14.500M5.800 5V13.500M10.200 5V13.500" stroke="#7f9bd0" stroke-width=".9"/></svg><svg style="left:350.8px;top:10.5px" width="7" height="4" viewBox="0 0 7 4"><path d="M1 0.5H6L3.5 3.2Z" fill="#000"/></svg><svg style="left:364.5px;top:4px" width="16" height="16" viewBox="0 0 16 16"><rect x="1.500" y="2.500" width="13" height="11" fill="#e4e8f0" stroke="#b1bbd0"/><path d="M1.500 5H14.500" stroke="#b1bbd0"/><path d="M1.500 2.500H14.500V5H1.500Z" fill="#cfd8ea"/><rect x="3" y="6.500" width="10" height="5.500" fill="#d5dbe8"/></svg><svg style="left:387.5px;top:4px" width="16" height="16" viewBox="0 0 16 16"><rect x="1.500" y="2.500" width="13" height="11" fill="#fff" stroke="#4a74c8"/><path d="M1.500 6H14.500M1.500 9.800H14.500M5.800 2.500V13.500M10.200 2.500V13.500" stroke="#4a74c8" stroke-width="1"/><rect x="1.500" y="6" width="4.300" height="3.800" fill="#4a74c8"/><rect x="6.300" y="10.300" width="3.500" height="3" fill="#9db7e8"/></svg><div class="sep" style="left:409.5px;top:4px"></div><svg style="left:416.5px;top:4px" width="16" height="16" viewBox="0 0 16 16"><rect x="1.500" y="2.500" width="13" height="11" fill="#fff" stroke="#5e6678"/><path d="M1.500 13.500H14.500V2.500" fill="none" stroke="#3a4254" stroke-width="1"/><path d="M3.500 5.500H12.500M3.500 7.500H10" stroke="#000" stroke-width="1.100"/></svg><svg style="left:436.8px;top:10.5px" width="7" height="4" viewBox="0 0 7 4"><path d="M1 0.5H6L3.5 3.2Z" fill="#000"/></svg><svg style="left:450.5px;top:4px" width="16" height="16" viewBox="0 0 16 16"><rect x="1.500" y="2" width="6.500" height="5" fill="#f2f5fb" stroke="#8e9fc4"/><rect x="1.500" y="9" width="6.500" height="5" fill="#f2f5fb" stroke="#8e9fc4"/><path d="M11.500 0.500V15.500M8.500 4.500H14.500M8.500 11.500H14.500" stroke="#1f3c8c" stroke-width="1.200"/></svg><svg style="left:473.5px;top:4px" width="16" height="16" viewBox="0 0 16 16"><rect x="2" y="7.500" width="5" height="6.500" fill="#f2f5fb" stroke="#8e9fc4"/><rect x="9" y="7.500" width="5" height="6.500" fill="#f2f5fb" stroke="#8e9fc4"/><path d="M0.500 4.500H15.500M4.500 1.500V7.500M11.500 1.500V7.500" stroke="#1f3c8c" stroke-width="1.200"/></svg><div class="sep" style="left:495.5px;top:4px"></div><svg style="left:502.5px;top:4px" width="16" height="16" viewBox="0 0 16 16"><rect x="4.500" y="5.500" width="11" height="9.500" fill="#fff" stroke="#8a8f9c"/><rect x="4.500" y="5.500" width="11" height="2.500" fill="#e0503a"/><path d="M4.500 10.500H15.500M4.500 12.800H15.500M8 8V15M11.700 8V15" stroke="#a8aebc" stroke-width=".9"/><path d="M8 0.500L2.500 7H5.500L2 12.500L9 5.500H6Z" fill="#f7d23c" stroke="#a47c12" stroke-width=".7"/></svg><svg style="left:525.5px;top:4px" width="16" height="16" viewBox="0 0 16 16"><path d="M2.500 1V14M5.500 1V14M8.500 1V14" stroke="#000" stroke-width="1.100"/><path d="M2.500 15.500V14M5.500 15.500V14M8.500 15.500V14" stroke="#000" stroke-width="1.100" stroke-dasharray="1 1"/><text x="12.500" y="8" font-family="Liberation Sans, sans-serif" font-size="7" text-anchor="middle" fill="#2f5fd0" transform="rotate(90 12.500 5.500)">A</text><path d="M11.500 9V14" stroke="#000" stroke-width="1" stroke-dasharray="1 1"/></svg><div class="sep" style="left:547.5px;top:4px"></div><svg style="left:554.5px;top:4px" width="16" height="16" viewBox="0 0 16 16"><text x="4" y="7" font-family="Liberation Serif, serif" font-size="8.500" font-weight="bold" text-anchor="middle" fill="#2b4fa8">А</text><text x="4" y="15" font-family="Liberation Serif, serif" font-size="8.500" font-weight="bold" text-anchor="middle" fill="#b03a3a">Я</text><path d="M11.500 1V13" stroke="#000" stroke-width="1.300"/><path d="M8.800 10.500L11.500 15L14.200 10.500Z" fill="#000"/></svg><svg style="left:577.5px;top:4px" width="16" height="16" viewBox="0 0 16 16"><text x="4" y="7" font-family="Liberation Serif, serif" font-size="8.500" font-weight="bold" text-anchor="middle" fill="#b03a3a">Я</text><text x="4" y="15" font-family="Liberation Serif, serif" font-size="8.500" font-weight="bold" text-anchor="middle" fill="#2b4fa8">А</text><path d="M11.500 1V13" stroke="#000" stroke-width="1.300"/><path d="M8.800 10.500L11.500 15L14.200 10.500Z" fill="#000"/></svg><svg style="left:600.5px;top:4px" width="16" height="16" viewBox="0 0 16 16"><text x="8" y="13.500" font-family="Liberation Sans, sans-serif" font-size="15" font-weight="bold" text-anchor="middle" fill="#000">Σ</text></svg><svg style="left:625px;top:14px" width="7" height="7" viewBox="0 0 7 7"><path d="M1 1.500H6" stroke="#fff" stroke-width="1"/><path d="M0.500 3.500H6.500L3.500 6.500Z" fill="#fff"/><path d="M1 .5H6" stroke="#000" stroke-width="1"/><path d="M0.5 2.5H6.5L3.5 5.5Z" fill="#000"/></svg></div></div>
<div id="work"><div style="position:absolute;left:0px;top:0px;width:1600px;height:1px;background:#a0a0a0"></div><div style="position:absolute;left:1px;top:1px;width:1599px;height:1px;background:#696969"></div><div style="position:absolute;left:0px;top:0px;width:1px;height:685px;background:#a0a0a0"></div><div style="position:absolute;left:1px;top:1px;width:1px;height:684px;background:#696969"></div><div style="position:absolute;left:5px;top:5px;width:17px;height:16px;border:1px solid #4a6fc4;background:#dbe8fb;box-shadow:inset 0 0 0 1px #fff,0 1px 0 #fff"><div style="position:absolute;left:5px;top:5px;width:2px;height:7px;background:#4a4a4a"></div><div style="position:absolute;left:5px;top:10px;width:7px;height:2px;background:#4a4a4a"></div></div><div style="position:absolute;left:64px;top:7px;width:173px;height:13px;background:#9fbdf3"></div><div style="position:absolute;left:239px;top:7px;width:356px;height:13px;background:#fff"></div><div style="position:absolute;left:598px;top:7px;width:22.5px;height:13px;background:#9fbdf3"></div><div style="position:absolute;left:623px;top:7px;width:357px;height:13px;background:#fff"></div><div style="position:absolute;left:983px;top:7px;width:23px;height:13px;background:#9fbdf3"></div><div style="position:absolute;left:1008px;top:7px;width:356px;height:13px;background:#fff"></div><div style="position:absolute;left:1367px;top:7px;width:175px;height:13px;background:#9fbdf3"></div><svg style="left:0;top:0" width="1600" height="26" viewBox="0 0 1600 26" font-family="Liberation Sans, sans-serif" font-size="10" fill="#000" stroke="none"><g stroke="#000" stroke-width="1"><path d="M78.5 12V14"/><path d="M114.5 12V14"/><path d="M131.5 11V16"/><path d="M149.5 12V14"/><path d="M184.5 12V14"/><path d="M202.5 11V16"/><path d="M219.5 12V14"/><path d="M255.5 12V14"/><path d="M272.5 11V16"/><path d="M290.5 12V14"/><path d="M325.5 12V14"/><path d="M343.5 11V16"/><path d="M360.5 12V14"/><path d="M396.5 12V14"/><path d="M413.5 11V16"/><path d="M431.5 12V14"/><path d="M466.5 12V14"/><path d="M484.5 11V16"/><path d="M501.5 12V14"/><path d="M537.5 12V14"/><path d="M554.5 11V16"/><path d="M572.5 12V14"/><path d="M607.5 12V14"/><path d="M625.5 11V16"/><path d="M642.5 12V14"/><path d="M678.5 12V14"/><path d="M695.5 11V16"/><path d="M713.5 12V14"/><path d="M748.5 12V14"/><path d="M766.5 11V16"/><path d="M783.5 12V14"/><path d="M819.5 12V14"/><path d="M836.5 11V16"/><path d="M854.5 12V14"/><path d="M889.5 12V14"/><path d="M907.5 11V16"/><path d="M924.5 12V14"/><path d="M960.5 12V14"/><path d="M977.5 11V16"/><path d="M995.5 12V14"/><path d="M1030.5 12V14"/><path d="M1048.5 11V16"/><path d="M1065.5 12V14"/><path d="M1101.5 12V14"/><path d="M1118.5 11V16"/><path d="M1136.5 12V14"/><path d="M1171.5 12V14"/><path d="M1189.5 11V16"/><path d="M1206.5 12V14"/><path d="M1242.5 12V14"/><path d="M1259.5 11V16"/><path d="M1277.5 12V14"/><path d="M1312.5 12V14"/><path d="M1330.5 11V16"/><path d="M1347.5 12V14"/><path d="M1383.5 12V14"/><path d="M1400.5 11V16"/><path d="M1418.5 12V14"/><path d="M1453.5 12V14"/><path d="M1471.5 11V16"/><path d="M1488.5 12V14"/><path d="M1524.5 12V14"/><path d="M62.500 11V16"/></g><text x="96.9" y="17.600" text-anchor="middle">2</text><text x="167.4" y="17.600" text-anchor="middle">1</text><text x="308.4" y="17.600" text-anchor="middle">1</text><text x="378.9" y="17.600" text-anchor="middle">2</text><text x="449.4" y="17.600" text-anchor="middle">3</text><text x="519.9" y="17.600" text-anchor="middle">4</text><text x="590.4" y="17.600" text-anchor="middle">5</text><text x="660.9" y="17.600" text-anchor="middle">6</text><text x="731.4" y="17.600" text-anchor="middle">7</text><text x="801.9" y="17.600" text-anchor="middle">8</text><text x="872.4" y="17.600" text-anchor="middle">9</text><text x="942.9" y="17.600" text-anchor="middle">10</text><text x="1013.4" y="17.600" text-anchor="middle">11</text><text x="1083.9" y="17.600" text-anchor="middle">12</text><text x="1154.4" y="17.600" text-anchor="middle">13</text><text x="1224.9" y="17.600" text-anchor="middle">14</text><text x="1295.4" y="17.600" text-anchor="middle">15</text><text x="1365.9" y="17.600" text-anchor="middle">16</text><text x="1436.4" y="17.600" text-anchor="middle">17</text><text x="1506.9" y="17.600" text-anchor="middle">18</text></svg><svg style="left:221.5px;top:9px" width="8" height="8" viewBox="0 0 8 8"><rect width="8" height="8" fill="#fff"/><g stroke="#8c8c8c" stroke-width="1"><path d="M0.5 0V8M0 0.5H8"/><path d="M2.5 0V8M0 2.5H8"/><path d="M4.5 0V8M0 4.5H8"/><path d="M6.5 0V8M0 6.5H8"/></g></svg><svg style="left:607px;top:9px" width="8" height="8" viewBox="0 0 8 8"><rect width="8" height="8" fill="#fff"/><g stroke="#8c8c8c" stroke-width="1"><path d="M0.5 0V8M0 0.5H8"/><path d="M2.5 0V8M0 2.5H8"/><path d="M4.5 0V8M0 4.5H8"/><path d="M6.5 0V8M0 6.5H8"/></g></svg><svg style="left:992px;top:9px" width="8" height="8" viewBox="0 0 8 8"><rect width="8" height="8" fill="#fff"/><g stroke="#8c8c8c" stroke-width="1"><path d="M0.5 0V8M0 0.5H8"/><path d="M2.5 0V8M0 2.5H8"/><path d="M4.5 0V8M0 4.5H8"/><path d="M6.5 0V8M0 6.5H8"/></g></svg><svg style="left:1374.5px;top:9px" width="8" height="8" viewBox="0 0 8 8"><rect width="8" height="8" fill="#fff"/><g stroke="#8c8c8c" stroke-width="1"><path d="M0.5 0V8M0 0.5H8"/><path d="M2.5 0V8M0 2.5H8"/><path d="M4.5 0V8M0 4.5H8"/><path d="M6.5 0V8M0 6.5H8"/></g></svg><svg style="left:618px;top:4px" width="12" height="23" viewBox="0 0 12 23">
<path d="M1.500 0.500H10.500V3.500L6 9L1.500 3.500Z" fill="#f2f2f2" stroke="#6e6e6e"/>
<path d="M6 9L10.500 14V21.500H1.500V14Z" fill="#f2f2f2" stroke="#6e6e6e"/><path d="M1.500 16.500H10.500" stroke="#6e6e6e"/></svg><svg style="left:976px;top:11px" width="11" height="10" viewBox="0 0 11 10"><path d="M5.500 0.800L9.500 4.800V8.500H1.500V4.800Z" fill="#f2f2f2" stroke="#6e6e6e"/></svg><div style="position:absolute;left:975px;top:21px;width:1px;height:3px;background:#6e6e6e"></div><div style="position:absolute;left:6px;top:26px;width:15px;height:641px;background:#fff"></div><svg style="left:0;top:0" width="26" height="684" viewBox="0 0 26 684" font-family="Liberation Sans, sans-serif" font-size="10" fill="#000"><g stroke="#000" stroke-width="1"><path d="M11 36.5H16"/><path d="M12 53.5H14"/><path d="M12 89.5H14"/><path d="M11 106.5H16"/><path d="M12 124.5H14"/><path d="M12 159.5H14"/><path d="M11 177.5H16"/><path d="M12 194.5H14"/><path d="M12 230.5H14"/><path d="M11 247.5H16"/><path d="M12 265.5H14"/><path d="M12 300.5H14"/><path d="M11 318.5H16"/><path d="M12 335.5H14"/><path d="M12 371.5H14"/><path d="M11 388.5H16"/><path d="M12 406.5H14"/><path d="M12 441.5H14"/><path d="M11 459.5H16"/><path d="M12 476.5H14"/><path d="M12 512.5H14"/><path d="M11 529.5H16"/><path d="M12 547.5H14"/><path d="M12 582.5H14"/><path d="M11 600.5H16"/><path d="M12 617.5H14"/><path d="M12 653.5H14"/></g><text transform="translate(17.200 71.8) rotate(-90)" text-anchor="middle">7</text><text transform="translate(17.200 142.3) rotate(-90)" text-anchor="middle">8</text><text transform="translate(17.200 212.8) rotate(-90)" text-anchor="middle">9</text><text transform="translate(17.200 283.3) rotate(-90)" text-anchor="middle">10</text><text transform="translate(17.200 353.8) rotate(-90)" text-anchor="middle">11</text><text transform="translate(17.200 424.3) rotate(-90)" text-anchor="middle">12</text><text transform="translate(17.200 494.8) rotate(-90)" text-anchor="middle">13</text><text transform="translate(17.200 565.3) rotate(-90)" text-anchor="middle">14</text><text transform="translate(17.200 635.8) rotate(-90)" text-anchor="middle">15</text></svg><div style="position:absolute;left:7px;top:238px;width:14px;height:6px;background:#9fbdf3"></div><div style="position:absolute;left:7px;top:582px;width:14px;height:6px;background:#9fbdf3"></div><div id="ws"><div id="page"><div style="position:absolute;left:162px;top:0px;width:1px;height:641px;background:#a6a6a6"></div><div style="position:absolute;left:546px;top:0px;width:1px;height:641px;background:#a6a6a6"></div><div style="position:absolute;left:931px;top:0px;width:1px;height:641px;background:#a6a6a6"></div><div style="position:absolute;left:1316px;top:0px;width:1px;height:641px;background:#a6a6a6"></div><div style="position:absolute;left:162px;top:212px;width:1155px;height:1px;background:#a6a6a6"></div><div style="position:absolute;left:162px;top:556px;width:1155px;height:1px;background:#a6a6a6"></div><svg style="left:0;top:0" width="1480" height="641" viewBox="0 0 1480 641"><g stroke="#000" fill="none" stroke-linecap="butt"><circle cx="340.60" cy="64.60" r="91.500" stroke-width="2.200" fill="none"/><path d="M193.80 64.60L489.00 64.60" stroke-width="1.9"/><path d="M499.50 64.60L485.00 57.40L485.00 71.80Z" fill="#000" stroke="none"/><path d="M340.80 -12.00L340.80 205.50" stroke-width="1.9"/><path d="M574.00 64.80L869.00 64.80" stroke-width="1.9"/><path d="M879.50 64.80L865.00 57.60L865.00 72.00Z" fill="#000" stroke="none"/><path d="M721.20 -12.00L721.20 205.50" stroke-width="1.9"/><path d="M627.60 -12.00L627.60 155.40L812.50 155.40L812.50 -12.00" stroke-width="1.9" fill="none"/><path d="M667.00 12.30L773.20 12.30L773.20 116.20L667.00 116.20Z" stroke-width="1.9" fill="none"/><path d="M967.00 63.00L1263.00 63.00" stroke-width="1.9"/><path d="M1273.30 63.00L1258.80 55.80L1258.80 70.20Z" fill="#000" stroke="none"/><path d="M1114.00 -12.00L1114.00 204.00" stroke-width="1.9"/><path d="M1044.50 63.00L1114.00 -25.50L1182.00 63.00L1114.00 151.70Z" stroke-width="1.9" fill="none"/><path d="M261.50 240.00L261.50 508.80" stroke-width="1.9"/><path d="M261.50 232.30L254.30 246.80L268.70 246.80Z" fill="#000" stroke="none"/><path d="M225.80 479.80L521.00 479.80" stroke-width="1.9"/><path d="M531.30 479.80L516.80 472.60L516.80 487.00Z" fill="#000" stroke="none"/><path d="M297.00 479.80L297.00 338.40L467.50 338.40L467.50 479.80" stroke-width="1.9" fill="none"/><path d="M378.50 302.50L378.50 494.70" stroke-width="1.9"/><path d="M378.50 366.40A46 46 0 0 0 378.50 458.60L383.00 458.60" stroke-width="1.900" fill="none"/><ellipse cx="378.60" cy="412.30" rx="5.300" ry="6.200" fill="#000" stroke="none"/><path d="M247.50 339.00L379.00 338.60" stroke-width="1.9" stroke-dasharray="12.500 5.500"/><path d="M250.80 413.60L373.00 413.40" stroke-width="1.9" stroke-dasharray="12.500 5.500"/><path d="M251.50 460.30L378.00 458.80" stroke-width="1.9" stroke-dasharray="12.500 5.500"/><path d="M719.00 258.00L719.00 524.30" stroke-width="1.9"/><path d="M719.00 250.40L711.80 264.90L726.20 264.90Z" fill="#000" stroke="none"/><path d="M572.00 405.60L868.00 405.60" stroke-width="1.9"/><path d="M878.30 405.60L863.80 398.40L863.80 412.80Z" fill="#000" stroke="none"/><path d="M639.50 405.60L719.00 305.00L799.50 405.60" stroke-width="1.9" fill="none"/><path d="M1112.80 240.00L1112.80 528.50" stroke-width="1.9"/><path d="M1112.80 232.30L1105.60 246.80L1120.00 246.80Z" fill="#000" stroke="none"/><path d="M965.80 387.80L1262.00 387.80" stroke-width="1.9"/><path d="M1272.20 387.80L1257.70 380.60L1257.70 395.00Z" fill="#000" stroke="none"/><path d="M1022.80 387.80L1067.50 308.80L1157.00 308.80L1201.50 387.80L1157.00 469.80L1067.50 469.80Z" stroke-width="1.9" fill="none"/><path d="M1157.30 303.00L1157.30 412.50" stroke-width="1.9" stroke-dasharray="14 6"/><path d="M347.00 616.00L347.00 648.00" stroke-width="1.9"/><path d="M347.00 608.30L339.80 622.80L354.20 622.80Z" fill="#000" stroke="none"/><path d="M719.00 616.00L719.00 648.00" stroke-width="1.9"/><path d="M719.00 608.30L711.80 622.80L726.20 622.80Z" fill="#000" stroke="none"/><path d="M1112.80 616.00L1112.80 648.00" stroke-width="1.9"/><path d="M1112.80 608.30L1105.60 622.80L1120.00 622.80Z" fill="#000" stroke="none"/></g><g font-family="Liberation Serif, serif" font-weight="bold" fill="#000"><text x="241.60" y="2.20" font-size="24.8">A</text><text x="347.30" y="55.60" font-size="24.8">0</text><text x="443.00" y="49.80" font-size="24.8">d</text><path d="M443.50 55.50l2 -2l2 2l2 -2l2 2l2 -2l2 2" fill="none" stroke="#0f9a0f" stroke-width="0.950"/><text x="466.70" y="105.20" font-size="24.8">X</text><text x="429.60" y="136.20" font-size="24.8">B</text><text x="599.00" y="28.20" font-size="24.8">B</text><text x="696.50" y="8.20" font-size="24.8">c</text><text x="780.30" y="56.80" font-size="24.8">c</text><text x="818.70" y="56.80" font-size="24.8">d</text><text x="728.80" y="96.00" font-size="24.8">0</text><text x="847.60" y="105.60" font-size="24.8">X</text><text x="780.60" y="135.60" font-size="24.8">A</text><text x="1083.00" y="45.60" font-size="24.8">A</text><text x="1120.00" y="54.80" font-size="24.8">0</text><text x="1181.70" y="55.00" font-size="24.8">d</text><path d="M1182.00 60.00l2 -2l2 2l2 -2l2 2l2 -2l2 2l2 -2l2 2" fill="none" stroke="#0f9a0f" stroke-width="0.950"/><text x="1241.00" y="103.60" font-size="24.8">X</text><text x="1156.60" y="136.80" font-size="24.8">B</text><text transform="translate(176.00 239.00) scale(1 1.045)" font-size="29.760">19.</text><text transform="translate(560.00 239.00) scale(1 1.045)" font-size="29.760">20.</text><text transform="translate(944.30 239.00) scale(1 1.045)" font-size="29.760">21.</text><text transform="translate(176.00 582.70) scale(1 1.045)" font-size="29.760">22.</text><text transform="translate(560.00 582.70) scale(1 1.045)" font-size="29.760">23.</text><text transform="translate(944.30 582.70) scale(1 1.045)" font-size="29.760">24.</text><text x="270.00" y="270.10" font-size="24.8">Y</text><text x="350.50" y="405.70" font-size="24.8">A</text><text x="424.60" y="404.10" font-size="24.8">B</text><text x="488.00" y="468.30" font-size="24.8">X</text><text x="219.00" y="348.30" font-size="24.8">d</text><text x="233.00" y="352.50" font-size="16.5">2</text><text x="215.20" y="425.70" font-size="24.8">d</text><text x="228.80" y="430.00" font-size="16.5">1</text><text x="217.20" y="467.00" font-size="24.8">d</text><path d="M217.50 471.60l2 -2l2 2l2 -2l2 2l2 -2l2 2" fill="none" stroke="#0f9a0f" stroke-width="0.950"/><text x="240.20" y="510.00" font-size="24.8">0</text><text x="289.00" y="508.00" font-size="24.8">c</text><path d="M289.00 512.60l2 -2l2 2l2 -2l2 2l2 -2l2 2" fill="none" stroke="#0f9a0f" stroke-width="0.950"/><text x="368.30" y="508.00" font-size="24.8">c</text><text x="378.30" y="512.50" font-size="16.5">1</text><text x="455.20" y="508.00" font-size="24.8">c</text><text x="465.30" y="512.50" font-size="16.5">2</text><text x="737.00" y="283.70" font-size="24.8">Y</text><text x="729.50" y="305.00" font-size="24.8">c</text><text x="782.80" y="363.70" font-size="24.8">B</text><text x="693.00" y="382.00" font-size="24.8">A</text><text x="603.50" y="390.00" font-size="24.8">-d</text><text x="726.30" y="396.70" font-size="24.8">0</text><text x="821.30" y="390.00" font-size="24.8">d</text><text x="846.20" y="446.60" font-size="24.8">X</text><text x="1130.70" y="268.30" font-size="24.8">Y</text><text x="1084.00" y="303.30" font-size="24.8">c</text><text x="1081.30" y="373.70" font-size="24.8">0</text><text x="1123.50" y="368.00" font-size="24.8">A</text><text x="1215.00" y="372.50" font-size="24.8">d</text><text x="1162.80" y="416.70" font-size="24.8">e</text><text x="1239.20" y="429.50" font-size="24.8">X</text><text x="1181.60" y="458.00" font-size="24.8">B</text><text x="364.30" y="643.60" font-size="24.8">Y</text><text x="737.00" y="643.60" font-size="24.8">Y</text><text x="1130.70" y="643.60" font-size="24.8">Y</text></g></svg><div style="position:absolute;left:598px;top:557px;width:2px;height:33px;background:#000"></div><div style="position:absolute;left:556px;top:-5px;width:8px;height:7px;border:1px solid #8a8a8a;background:#fff"></div></div></div><div id="vsb"><div style="position:absolute;left:0px;top:0px;width:17px;height:10px;background:#f0f0f0;border-top:1px solid #fff;border-left:1px solid #fff;border-right:2px solid #696969;border-bottom:2px solid #696969"></div><svg style="left:5px;top:17px" width="9" height="5" viewBox="0 0 9 5"><path d="M0.500 4.500L4.500 0.500L8.500 4.500Z" fill="#3c3c3c"/></svg><div class="thumb" style="left:1.500px;top:262px;width:14.500px;height:62.500px;background:linear-gradient(90deg,#f3f3f3 0,#e8e8e8 45%,#d2d2d4 55%,#dcdcde 100%)"></div><svg style="left:5px;top:289px" width="8" height="9" viewBox="0 0 8 9"><path d="M0.500 1.500H7.500M0.500 4.500H7.500M0.500 7.500H7.500" stroke="#3a3a3a" stroke-width="1.400"/></svg><svg style="left:5px;top:604px" width="9" height="5" viewBox="0 0 9 5"><path d="M0.500 0.500L4.500 4.500L8.500 0.500Z" fill="#5a5a5a"/></svg><svg style="left:3.500px;top:619px" width="8" height="8" viewBox="0 0 8 8"><path d="M0.500 3.500L4 0.300L7.500 3.500ZM0.500 7L4 3.800L7.500 7Z" fill="#000"/></svg><svg style="left:3px;top:634px" width="9" height="9" viewBox="0 0 9 9"><circle cx="4.500" cy="4.500" r="3.500" fill="#b9b9b9" stroke="#3c3c3c" stroke-width="1"/><circle cx="3.600" cy="3.600" r="1.200" fill="#f4f4f4"/></svg><svg style="left:3.500px;top:652px" width="8" height="8" viewBox="0 0 8 8"><path d="M0.500 1L4 4.200L7.500 1ZM0.500 4.500L4 7.700L7.500 4.500Z" fill="#000"/></svg></div><div style="position:absolute;left:1599px;top:2px;width:1px;height:682px;background:#fafafa"></div><div id="hrow"><div style="position:absolute;left:34px;top:0;width:17px;height:17px;border:1px solid #000080;background:#ffc473"></div><svg style="left:4px;top:5px" width="10" height="9" viewBox="0 0 10 9"><path d="M0 0.500H8M0 2.500H8M0 4.500H8M0 6.500H8" stroke="#000" stroke-width="1"/></svg><svg style="left:21px;top:5px" width="10" height="9" viewBox="0 0 10 9"><rect x="0.600" y="0.600" width="6.300" height="4.800" fill="#fff" stroke="#000" stroke-width="1.200"/><circle cx="6.300" cy="5" r="1.900" fill="#2a8a3a" stroke="#1a2a9a" stroke-width=".7"/></svg><svg style="left:38px;top:5px" width="10" height="9" viewBox="0 0 10 9"><rect x="0.600" y="0.600" width="6.800" height="5.800" fill="#fff" stroke="#000" stroke-width="1.200"/><path d="M2 2.500H6M2 4.500H6" stroke="#000"/></svg><svg style="left:55px;top:5px" width="10" height="9" viewBox="0 0 10 9"><path d="M0 0.500H1.500M3 0.500H8M2 2.500H3M4.500 2.500H8M2 4.500H3M4.500 4.500H8M0 6.500H1.500M3 6.500H7" stroke="#000" stroke-width="1.100"/></svg><svg style="left:71px;top:5px" width="10" height="9" viewBox="0 0 10 9"><path d="M4.500 1.300Q2.500 0 0.500 0.800V6.200Q2.500 5.500 4.500 7Q6.500 5.500 8.500 6.200V0.800Q6.500 0 4.500 1.300Z" fill="#fff" stroke="#000" stroke-width="1"/><path d="M4.500 1.300V8.500M3 7L4.500 8.500L6 7M2 2.500L3.300 3M2 4.200L3.300 4.700M5.700 3L7 2.500M5.700 4.700L7 4.200" stroke="#000" stroke-width=".8" fill="none"/></svg><svg style="left:91px;top:5px" width="5" height="8" viewBox="0 0 5 8"><path d="M4.500 0L0.500 4L4.500 8Z" fill="#3c3c3c"/></svg><div class="thumb" style="left:103.500px;top:1.500px;width:1456px;height:14px;background:linear-gradient(180deg,#f3f3f3 0,#e9e9e9 45%,#d3d3d5 55%,#dcdcde 100%)"></div><svg style="left:826px;top:4.500px" width="9" height="8" viewBox="0 0 9 8"><path d="M1.500 0.500V7.500M4.500 0.500V7.500M7.500 0.500V7.500" stroke="#3a3a3a" stroke-width="1.400"/></svg><svg style="left:1569px;top:5px" width="5" height="8" viewBox="0 0 5 8"><path d="M0.500 0L4.500 4L0.500 8Z" fill="#3c3c3c"/></svg><div style="position:absolute;left:1579px;top:0px;width:18px;height:17px;background:#f0f0f0"></div></div></div>
<div id="draw"><div class="tb" style="left:3px;top:1px;width:660px"><div class="bg"></div><div class="sh"></div><div class="cap"></div><div class="grip" style="left:3px;top:3.5px"><i style="top:0px"></i><i style="top:4px"></i><i style="top:8px"></i><i style="top:12px"></i></div><span id="dr1" class="t ff-s" style="left:10.00px;top:4.94px;font-size:12px;letter-spacing:-0.106px;"><u>Р</u>исование</span><svg style="left:71px;top:10.5px" width="7" height="4" viewBox="0 0 7 4"><path d="M1 0.5H6L3.5 3.2Z" fill="#000"/></svg><svg style="left:84.5px;top:4px" width="16" height="16" viewBox="0 0 16 16"><path d="M4.500 1.500V13L7.500 10.300L9.500 15L11.300 14.200L9.300 9.700H13Z" fill="#fff" stroke="#444a58" stroke-width="1"/></svg><div class="sep" style="left:106.5px;top:4px"></div><span id="dr2" class="t ff-s" style="left:114.30px;top:4.94px;font-size:12px;letter-spacing:0.020px;">Автофи<u>г</u>уры</span><svg style="left:184.5px;top:10.5px" width="7" height="4" viewBox="0 0 7 4"><path d="M1 0.5H6L3.5 3.2Z" fill="#000"/></svg><svg style="left:198.5px;top:4px" width="16" height="16" viewBox="0 0 16 16"><path d="M2.500 2.500L13.500 13.500" stroke="#000" stroke-width="1.200"/></svg><svg style="left:221.5px;top:4px" width="16" height="16" viewBox="0 0 16 16"><path d="M3 3L11.500 11.500" stroke="#000" stroke-width="1.300"/><path d="M13.500 13.500L7.800 11.700L11.700 7.800Z" fill="#000"/></svg><svg style="left:244.5px;top:4px" width="16" height="16" viewBox="0 0 16 16"><rect x="0.500" y="2.500" width="15" height="11" fill="none" stroke="#000" stroke-width="1.200"/></svg><svg style="left:267.5px;top:4px" width="16" height="16" viewBox="0 0 16 16"><ellipse cx="8" cy="8" rx="7.500" ry="5.300" fill="none" stroke="#000" stroke-width="1.200"/></svg><svg style="left:290.5px;top:4px" width="16" height="16" viewBox="0 0 16 16"><rect x="1" y="1.500" width="14" height="13" fill="#fff" stroke="#7d8aa6"/><text x="4.500" y="8" font-family="Liberation Sans, sans-serif" font-size="7" font-weight="bold" text-anchor="middle" fill="#000">A</text><path d="M8 4.500H13.500M8 6.500H13.500M2.500 9.500H13.500M2.500 11.500H13.500" stroke="#8e97ab" stroke-width=".9"/></svg><svg style="left:313.5px;top:4px" width="16" height="16" viewBox="0 0 16 16"><text x="8" y="14" font-family="Liberation Serif, serif" font-size="18" font-weight="bold" font-style="italic" text-anchor="middle" fill="#3a72d8" stroke="#1f4aa0" stroke-width=".5" transform="skewX(-8)">A</text></svg><svg style="left:336.5px;top:4px" width="16" height="16" viewBox="0 0 16 16"><circle cx="8" cy="8" r="5" fill="none" stroke="#6a7388" stroke-width="1" stroke-dasharray="2 1.500"/><circle cx="8" cy="2.500" r="2" fill="#d8503c"/><circle cx="3" cy="11" r="2" fill="#3a72d8"/><circle cx="13" cy="11" r="2" fill="#4fae4a"/></svg><svg style="left:359.5px;top:4px" width="16" height="16" viewBox="0 0 16 16"><rect x="1.500" y="1.500" width="13" height="13" fill="#f4f0e4" stroke="#666c7a"/><circle cx="8" cy="6" r="2.700" fill="#d89a4a" stroke="#7a4a1a" stroke-width=".7"/><path d="M3.500 14Q4 9.500 8 9.500Q12 9.500 12.500 14Z" fill="#3b5cae" stroke="#24387a" stroke-width=".7"/></svg><svg style="left:382.5px;top:4px" width="16" height="16" viewBox="0 0 16 16"><rect x="1.500" y="1.500" width="13" height="13" fill="#eaf3fb" stroke="#666c7a"/><path d="M2.500 13.500L6.500 7.500L9.500 11L11 9.500L13.500 13.500Z" fill="#5a8a4a"/><circle cx="11" cy="5" r="1.600" fill="#e8b83a"/><path d="M9 9L14.500 14.500" stroke="#d03a3a" stroke-width="1.300"/></svg><div class="sep" style="left:404.5px;top:4px"></div><svg style="left:411.5px;top:4px" width="16" height="16" viewBox="0 0 16 16"><path d="M2 7L8 1.500L13 6.500L7.500 12Z" fill="#f5f7fb" stroke="#4f5a70" stroke-width="1"/><path d="M13 6.500Q15.500 8.500 14.500 11.500Q13 9.500 12.500 7Z" fill="#2f5fd0"/><rect x="0" y="12.500" width="16" height="3.500" fill="#ffff00"/></svg><svg style="left:431.8px;top:10.5px" width="7" height="4" viewBox="0 0 7 4"><path d="M1 0.5H6L3.5 3.2Z" fill="#000"/></svg><svg style="left:445.5px;top:4px" width="16" height="16" viewBox="0 0 16 16"><path d="M12.500 0.500L15 2.500L8.500 9.500L5.500 10.500L6.500 7.500Z" fill="#f0c24a" stroke="#8a6414" stroke-width=".8"/><path d="M1 9.500Q3 7 5 9" fill="none" stroke="#2f5fd0" stroke-width="1.300"/><rect x="0" y="12.500" width="16" height="3.500" fill="#1c3fd0"/></svg><svg style="left:465.8px;top:10.5px" width="7" height="4" viewBox="0 0 7 4"><path d="M1 0.5H6L3.5 3.2Z" fill="#000"/></svg><svg style="left:479.5px;top:4px" width="16" height="16" viewBox="0 0 16 16"><text x="8" y="11" font-family="Liberation Serif, serif" font-size="14.500" font-weight="bold" text-anchor="middle" fill="#1b2e8a">A</text><rect x="0" y="12.500" width="16" height="3.500" fill="#000"/></svg><svg style="left:499.8px;top:10.5px" width="7" height="4" viewBox="0 0 7 4"><path d="M1 0.5H6L3.5 3.2Z" fill="#000"/></svg><svg style="left:513.5px;top:4px" width="16" height="16" viewBox="0 0 16 16"><path d="M1 3.500H15" stroke="#000" stroke-width="1"/><path d="M1 7.500H15" stroke="#000" stroke-width="2.200"/><path d="M1 12.500H15" stroke="#000" stroke-width="3.200"/></svg><svg style="left:536.5px;top:4px" width="16" height="16" viewBox="0 0 16 16"><path d="M1 3.500H15" stroke="#000" stroke-width="1.200"/><path d="M1 7.500H15" stroke="#000" stroke-width="1.200" stroke-dasharray="1 1"/><path d="M1 11.500H15" stroke="#000" stroke-width="1.200" stroke-dasharray="3 1"/><path d="M1 14.500H15" stroke="#000" stroke-width="1" stroke-dasharray="1 2"/></svg><svg style="left:559.5px;top:4px" width="16" height="16" viewBox="0 0 16 16"><path d="M1 3.500H12M4 8H15M1 12.500H12" stroke="#000" stroke-width="1.200"/><path d="M15 3.500L11 1.200V5.800ZM1 8L5 5.700V10.300ZM15 12.500L11 10.200V14.800Z" fill="#000"/></svg><svg style="left:582.5px;top:4px" width="16" height="16" viewBox="0 0 16 16"><rect x="4.500" y="4.500" width="10" height="10" fill="#5e6678"/><rect x="1.500" y="1.500" width="10" height="10" fill="#3aa63a" stroke="#1e6a1e"/></svg><svg style="left:605.5px;top:4px" width="16" height="16" viewBox="0 0 16 16"><path d="M1.500 5.500L5 1.500H14.500V10.500L11 14.500H1.500Z" fill="#6db34a" stroke="#2d5a1a"/><path d="M1.500 5.500H11V14.500M11 5.500L14.500 1.500" fill="none" stroke="#2d5a1a"/><rect x="2" y="6" width="8.500" height="8" fill="#8fd06a"/></svg><svg style="left:628.5px;top:4px" width="16" height="16" viewBox="0 0 16 16"><rect x="1" y="1" width="14" height="14" fill="#1a1a1a"/><rect x="2.500" y="2.500" width="11" height="11" fill="#f0d890"/><path d="M2.500 13.500L6.500 7.500L9.500 11L11 9.500L13.500 13.500Z" fill="#5a6a3a"/><circle cx="10.500" cy="5.500" r="1.600" fill="#fff"/></svg><svg style="left:651px;top:14px" width="7" height="7" viewBox="0 0 7 7"><path d="M1 1.500H6" stroke="#fff" stroke-width="1"/><path d="M0.500 3.500H6.500L3.500 6.500Z" fill="#fff"/><path d="M1 .5H6" stroke="#000" stroke-width="1"/><path d="M0.5 2.5H6.5L3.5 5.5Z" fill="#000"/></svg></div><div style="position:absolute;left:0px;top:26px;width:1600px;height:1px;background:#9aa4b8"></div></div>
<div id="status"><span id="s1" class="t ff-s" style="left:11.00px;top:4.94px;font-size:12px;letter-spacing:0.385px;">Стр. 2</span><span id="s2" class="t ff-s" style="left:83.50px;top:4.94px;font-size:12px;letter-spacing:0.182px;">Разд 1</span><span id="s3" class="t ff-s" style="left:173.00px;top:4.94px;font-size:12px;letter-spacing:0.938px;">2/3</span><span id="s4" class="t ff-s" style="left:227.00px;top:4.94px;font-size:12px;letter-spacing:0.237px;">На 15,6 см</span><span id="s5" class="t ff-s" style="left:296.00px;top:4.94px;font-size:12px;letter-spacing:0.331px;">Ст 30</span><span id="s6" class="t ff-s" style="left:344.50px;top:4.94px;font-size:12px;letter-spacing:0.516px;">Кол 4</span><span id="s7" class="t ff-s" style="left:414.00px;top:4.94px;font-size:12px;color:#a9a9a9;transform:scaleX(0.9053);transform-origin:0 0;">ЗАП</span><span id="s8" class="t ff-s" style="left:446.50px;top:4.94px;font-size:12px;color:#a9a9a9;transform:scaleX(0.8549);transform-origin:0 0;">ИСПР</span><span id="s9" class="t ff-s" style="left:486.50px;top:4.94px;font-size:12px;color:#a9a9a9;transform:scaleX(0.9474);transform-origin:0 0;">ВДЛ</span><span id="s10" class="t ff-s" style="left:520.00px;top:4.94px;font-size:12px;color:#a9a9a9;transform:scaleX(0.9109);transform-origin:0 0;">ЗАМ</span><span id="s11" class="t ff-s" style="left:555.00px;top:4.94px;font-size:12px;letter-spacing:0.302px;">английский</span><svg style="left:642px;top:4px" width="24" height="14" viewBox="0 0 24 14"><path d="M7 3Q4 1.500 1 2.500V11Q4 10 7 11.500Q10 10 13 11V2.500Q10 1.500 7 3Z" fill="#fff" stroke="#000" stroke-width="1"/><path d="M7 3V11.500M3 5H5M3 7H5M9 5H11M9 7H11" stroke="#000" stroke-width=".8"/><path d="M14 3L21 12M21 3L14 12" stroke="#c0281e" stroke-width="2"/></svg></div>
<div id="taskbar"><div class="top"></div><div class="tbtn" style="left:59px"></div><div class="tbtn" style="left:183px"></div><div class="tbtn" style="left:307px"></div><div class="tbtn" style="left:369px"></div><div class="tbtn" style="left:431px"></div><div class="tbtn" style="left:493px"></div><div class="tbtn act" style="left:555px"></div><svg style="left:7px;top:0px" width="40" height="40" viewBox="0 0 40 40"><defs><radialGradient id="orb" cx=".5" cy=".4" r=".62"><stop offset="0" stop-color="#6fb2e0"/><stop offset=".5" stop-color="#2f74b8"/><stop offset=".85" stop-color="#12447e"/><stop offset="1" stop-color="#0a2a55"/></radialGradient>
<radialGradient id="orbg" cx=".5" cy="1" r=".55"><stop offset="0" stop-color="#3fe8ff" stop-opacity=".95"/><stop offset=".5" stop-color="#2fb8f0" stop-opacity=".5"/><stop offset="1" stop-color="#3fa0e8" stop-opacity="0"/></radialGradient></defs>
<circle cx="20" cy="20" r="19.300" fill="#0a1a38" opacity=".75"/><circle cx="20" cy="20" r="18" fill="url(#orb)" stroke="#7faad4" stroke-width="1"/><circle cx="20" cy="20" r="17.500" fill="url(#orbg)"/>
<path d="M4 16Q20 2 36 16Q34 19 20 17Q6 19 4 16Z" fill="#fff" opacity=".28"/>
<path d="M11 10.500Q15.500 8.500 20 11L18.300 18.500Q14 16.500 9.300 18.800Z" fill="#f0582a"/><path d="M21.500 11.500Q26 14 31 11L29.300 18.500Q24.500 21.500 19.800 19Z" fill="#8cc63e"/>
<path d="M8.800 20.800Q13.500 18.500 17.800 20.500L16 28Q12 26.300 7.300 28.800Z" fill="#2f9be0"/><path d="M19.300 21Q24 23.500 28.800 20.800L27 28.300Q22.500 31.200 17.500 29Z" fill="#fdc82a"/>
</svg><svg style="left:74px;top:8px" width="30" height="28" viewBox="0 0 30 28"><path d="M20 3L28 2V25L20 24Z" fill="#5f9fd4" stroke="#2f6aa8" stroke-width=".6"/><path d="M17 3L25 2.500V25L17 24.500Z" fill="#86bce6" stroke="#3c7ab8" stroke-width=".6"/>
<rect x="1.500" y="2" width="21" height="23" rx="1.500" fill="#a7d2f0" stroke="#3f82c0" stroke-width=".8"/><circle cx="12.500" cy="13.500" r="9" fill="#f2821e" stroke="#fbd3a0" stroke-width="1"/><path d="M9.500 8L18 13.500L9.500 19Z" fill="#fff"/></svg><svg style="left:136px;top:5px" width="30" height="30" viewBox="0 0 30 30"><circle cx="15" cy="15" r="14" fill="#e8453c"/>
<path d="M15 15L2.900 8A14 14 0 0 0 9.500 27.900Z" fill="#e8453c"/>
<path d="M2.900 8A14 14 0 0 0 15 29L21.100 18.500L15 15Z" fill="#3aa757"/><path d="M2.900 8L9 18.500L15 15Z" fill="#3aa757"/>
<path d="M27.100 8H15L21.100 18.500L15 29A14 14 0 0 0 27.100 8Z" fill="#fbc116"/>
<path d="M2.900 8A14 14 0 0 1 27.100 8H15Z" fill="#e8453c"/>
<circle cx="15" cy="15" r="6.400" fill="#fff"/><circle cx="15" cy="15" r="5" fill="#4a8af4"/></svg><svg style="left:197px;top:4px" width="32" height="32" viewBox="0 0 32 32"><path d="M1 1.500H28L31 4.500V30.500H1Z" fill="#1f48c8" stroke="#0f2a86" stroke-width="1"/><rect x="9" y="1.500" width="13" height="9" fill="#cfd3da"/><rect x="16.500" y="2.500" width="3.500" height="7" fill="#1f48c8"/>
<rect x="4" y="13" width="24" height="17.500" fill="#fff"/><path d="M5 16.500H27M5 20.500H27M5 24.500H16" stroke="#d02030" stroke-width="1.300"/>
<text x="21.500" y="28.500" font-family="Liberation Mono, monospace" font-size="8" font-weight="bold" text-anchor="middle" fill="#444">64</text></svg><svg style="left:263px;top:5px" width="23" height="30" viewBox="0 0 23 30"><rect x="0.500" y="0.500" width="22" height="29" rx="2" fill="#9fd0f0" stroke="#3f8ac8"/><rect x="3" y="3" width="17" height="7" fill="#e8f4fb" stroke="#f0a030" stroke-width=".8"/>
<text x="17" y="9" font-family="Liberation Mono, monospace" font-size="6" text-anchor="middle" fill="#456">0</text>
<g fill="#f4fafd"><rect x="3" y="12.5" width="3" height="2.600"/><rect x="7.5" y="12.5" width="3" height="2.600"/><rect x="12" y="12.5" width="3" height="2.600"/><rect x="16.5" y="12.5" width="3" height="2.600"/><rect x="3" y="16.5" width="3" height="2.600"/><rect x="7.5" y="16.5" width="3" height="2.600"/><rect x="12" y="16.5" width="3" height="2.600"/><rect x="16.5" y="16.5" width="3" height="2.600"/><rect x="3" y="20.5" width="3" height="2.600"/><rect x="7.5" y="20.5" width="3" height="2.600"/><rect x="12" y="20.5" width="3" height="2.600"/><rect x="16.5" y="20.5" width="3" height="2.600"/><rect x="3" y="24.5" width="3" height="2.600"/><rect x="7.5" y="24.5" width="3" height="2.600"/><rect x="12" y="24.5" width="3" height="2.600"/><rect x="16.5" y="24.5" width="3" height="2.600"/></g><rect x="16.500" y="20.500" width="3.500" height="7" fill="#f0a030"/></svg><svg style="left:320px;top:6px" width="34" height="30" viewBox="0 0 34 30"><path d="M2 5Q2 3 4 3H12L14 6H30Q32 6 32 8V27H2Z" fill="#f4dc8a" stroke="#c8a23a" stroke-width=".8"/><path d="M6 9H32V27H6Z" fill="#f8e7a4" stroke="#d1ad4a" stroke-width=".6"/>
<rect x="5" y="1.500" width="4" height="2.500" fill="#3aaa3a"/><rect x="14" y="3" width="4" height="2.500" fill="#d83a2a"/><rect x="21" y="5" width="4" height="2.500" fill="#3a8ae0"/>
<path d="M4 17Q4 15 6 15H24Q26 15 26 17V29H20V21H10V29H4Z" fill="#7fd0f4" stroke="#3a9ad8" stroke-width=".9"/><path d="M5 17H25" stroke="#d8f4ff" stroke-width="1.600"/></svg><svg style="left:380px;top:3px" width="38" height="34" viewBox="0 0 38 34"><path d="M14 5Q22 -1 33 8Q26 8 24 11Z" fill="#f8a81a"/><path d="M25 17L37 9Q34 18 37 28Z" fill="#f28a10"/><path d="M12 27Q16 34 24 31Q20 28 19 25Z" fill="#f28a10"/>
<ellipse cx="16" cy="18" rx="13" ry="11" fill="#f59a14"/><path d="M8 11Q16 6 24 10Q28 18 22 26Q14 30 7 25Z" fill="#f8b422"/><path d="M19 9Q22 18 18 27M24 11Q27 18 23 25" stroke="#e0481a" stroke-width="1.600" fill="none"/>
<circle cx="10.500" cy="15.500" r="4" fill="#fff"/><circle cx="10" cy="16" r="2.600" fill="#2a8ad8"/><circle cx="10" cy="16" r="1.200" fill="#101828"/><path d="M5 23Q8 25.500 11.500 24" stroke="#8a3a0a" stroke-width="1" fill="none"/></svg><svg style="left:446px;top:5px" width="32" height="31" viewBox="0 0 32 31"><g transform="translate(32 0) scale(-1 1)"><path d="M8 6L22 1L29 23L15 29Z" fill="#e9e9f0" stroke="#8a8aa0" stroke-width=".8"/><path d="M4 10L17 5L24 26L11 30Z" fill="#fafafc" stroke="#8a8aa0" stroke-width=".8"/>
<path d="M6 11.500L8.500 10.500L9 13.500ZM18 24L20.500 23L21 26.500Z" fill="#d02a2a"/>
<ellipse cx="16" cy="9.500" rx="4.200" ry="5.500" fill="#3a2ac0" transform="rotate(-25 16 9.500)"/><ellipse cx="15" cy="8.500" rx="1.800" ry="3" fill="#d0303a" transform="rotate(-25 15 8.500)"/><circle cx="14" cy="16" r="2.600" fill="#2a1a9a"/>
<path d="M13 15L4 12M13 16.500L2 20M14 18L6 27M15.500 18L13 29M16.500 16L27 21M17 14.500L30 14M16 13L25 3M14 13.500L7 5" stroke="#5a4ad8" stroke-width=".9" fill="none"/></g></svg><svg style="left:509px;top:4px" width="29" height="32" viewBox="0 0 29 32"><path d="M2 25H27L28.500 30.500H0.500Z" fill="#f08a18" stroke="#c86408" stroke-width=".7"/><path d="M12 2Q14.500 0 17 2L24 25Q14.500 29 5 25Z" fill="#f6921e"/>
<path d="M10.300 8Q14.500 9.500 18.700 8L20.300 13Q14.500 15 8.700 13Z" fill="#f4f4f4"/><path d="M7.300 17.500Q14.500 20 21.700 17.500L23.200 22.500Q14.500 25.500 5.800 22.500Z" fill="#f4f4f4"/></svg><svg style="left:566px;top:5px" width="30" height="30" viewBox="0 0 30 30"><rect x="1" y="1" width="28" height="28" fill="#f4f7ff" stroke="#3a62c0" stroke-width="2"/><rect x="3.500" y="3.500" width="23" height="23" fill="#d5e0f8" stroke="#9db4e8" stroke-width="1"/>
<text x="14.500" y="23" font-family="Liberation Sans, sans-serif" font-size="22" font-weight="bold" font-style="italic" text-anchor="middle" fill="#2f5fc8" stroke="#1a3a8a" stroke-width=".6" textLength="21" lengthAdjust="spacingAndGlyphs">W</text></svg><div style="position:absolute;left:608px;top:2px;width:1px;height:36px;background:rgba(20,10,30,.7)"></div><div style="position:absolute;left:611px;top:2px;width:1px;height:36px;background:rgba(20,10,30,.6)"></div><span id="ru" class="t ff-s" style="left:1386.30px;top:10.94px;font-size:12px;color:#fff;letter-spacing:-0.422px;">RU</span><svg style="left:1417px;top:18px" width="9" height="6" viewBox="0 0 9 6"><path d="M0.500 5.500L4.500 0.800L8.500 5.500Z" fill="#fff"/></svg><svg style="left:1438px;top:14px" width="18" height="16" viewBox="0 0 18 16"><rect x="1" y="11" width="2" height="3" fill="#fff"/><rect x="4.500" y="9" width="2" height="5" fill="#fff"/><rect x="8" y="6" width="2" height="8" fill="#cfcfcf"/><rect x="11.500" y="3" width="2" height="11" fill="#a9a9a9"/><rect x="15" y="0" width="2" height="14" fill="#8f8f8f"/>
<path d="M10 7L15.500 15.500H4.500Z" fill="#f6d21e" stroke="#a88a0a" stroke-width=".6"/><path d="M10 10V13M10 14V15" stroke="#222" stroke-width="1.200"/></svg><svg style="left:1462px;top:12px" width="16" height="17" viewBox="0 0 16 17"><rect x="1.500" y="3.500" width="8" height="12" rx="1" fill="#2b1a40" stroke="#fff" stroke-width="1.400"/><rect x="4" y="1.500" width="3" height="2" fill="#fff"/>
<path d="M7 4.500H14V8Q14 11 10.500 11Q7 11 7 8Z" fill="#fff"/><path d="M8.500 1.500V5M12.500 1.500V5" stroke="#fff" stroke-width="1.500"/><path d="M10.500 11V14Q10.500 16 8 16" stroke="#fff" stroke-width="1.400" fill="none"/></svg><svg style="left:1485px;top:13px" width="17" height="16" viewBox="0 0 17 16"><path d="M1 5.500H4L8.500 1.500V14.500L4 10.500H1Z" fill="#fff" stroke="#d8d8d8" stroke-width=".6"/><path d="M10.500 5.500Q12 8 10.500 10.500M12.500 3.500Q15.500 8 12.500 12.500" stroke="#fff" stroke-width="1.300" fill="none"/></svg><span id="clk" class="t ff-s" style="left:1533.50px;top:6.14px;font-size:12px;color:#fff;transform:scaleX(0.8991);transform-origin:0 0;">12:44</span><span id="date" class="t ff-s" style="left:1519.50px;top:22.94px;font-size:12px;color:#fff;transform:scaleX(0.8991);transform-origin:0 0;">24.10.2013</span><div style="position:absolute;left:1586px;top:1px;width:15px;height:40px;border:1px solid rgba(10,5,20,.8);box-shadow:inset 0 0 0 1px rgba(255,255,255,.35);background:linear-gradient(135deg,rgba(255,255,255,.30),rgba(255,255,255,.05) 60%)"></div></div>
</body></html>
